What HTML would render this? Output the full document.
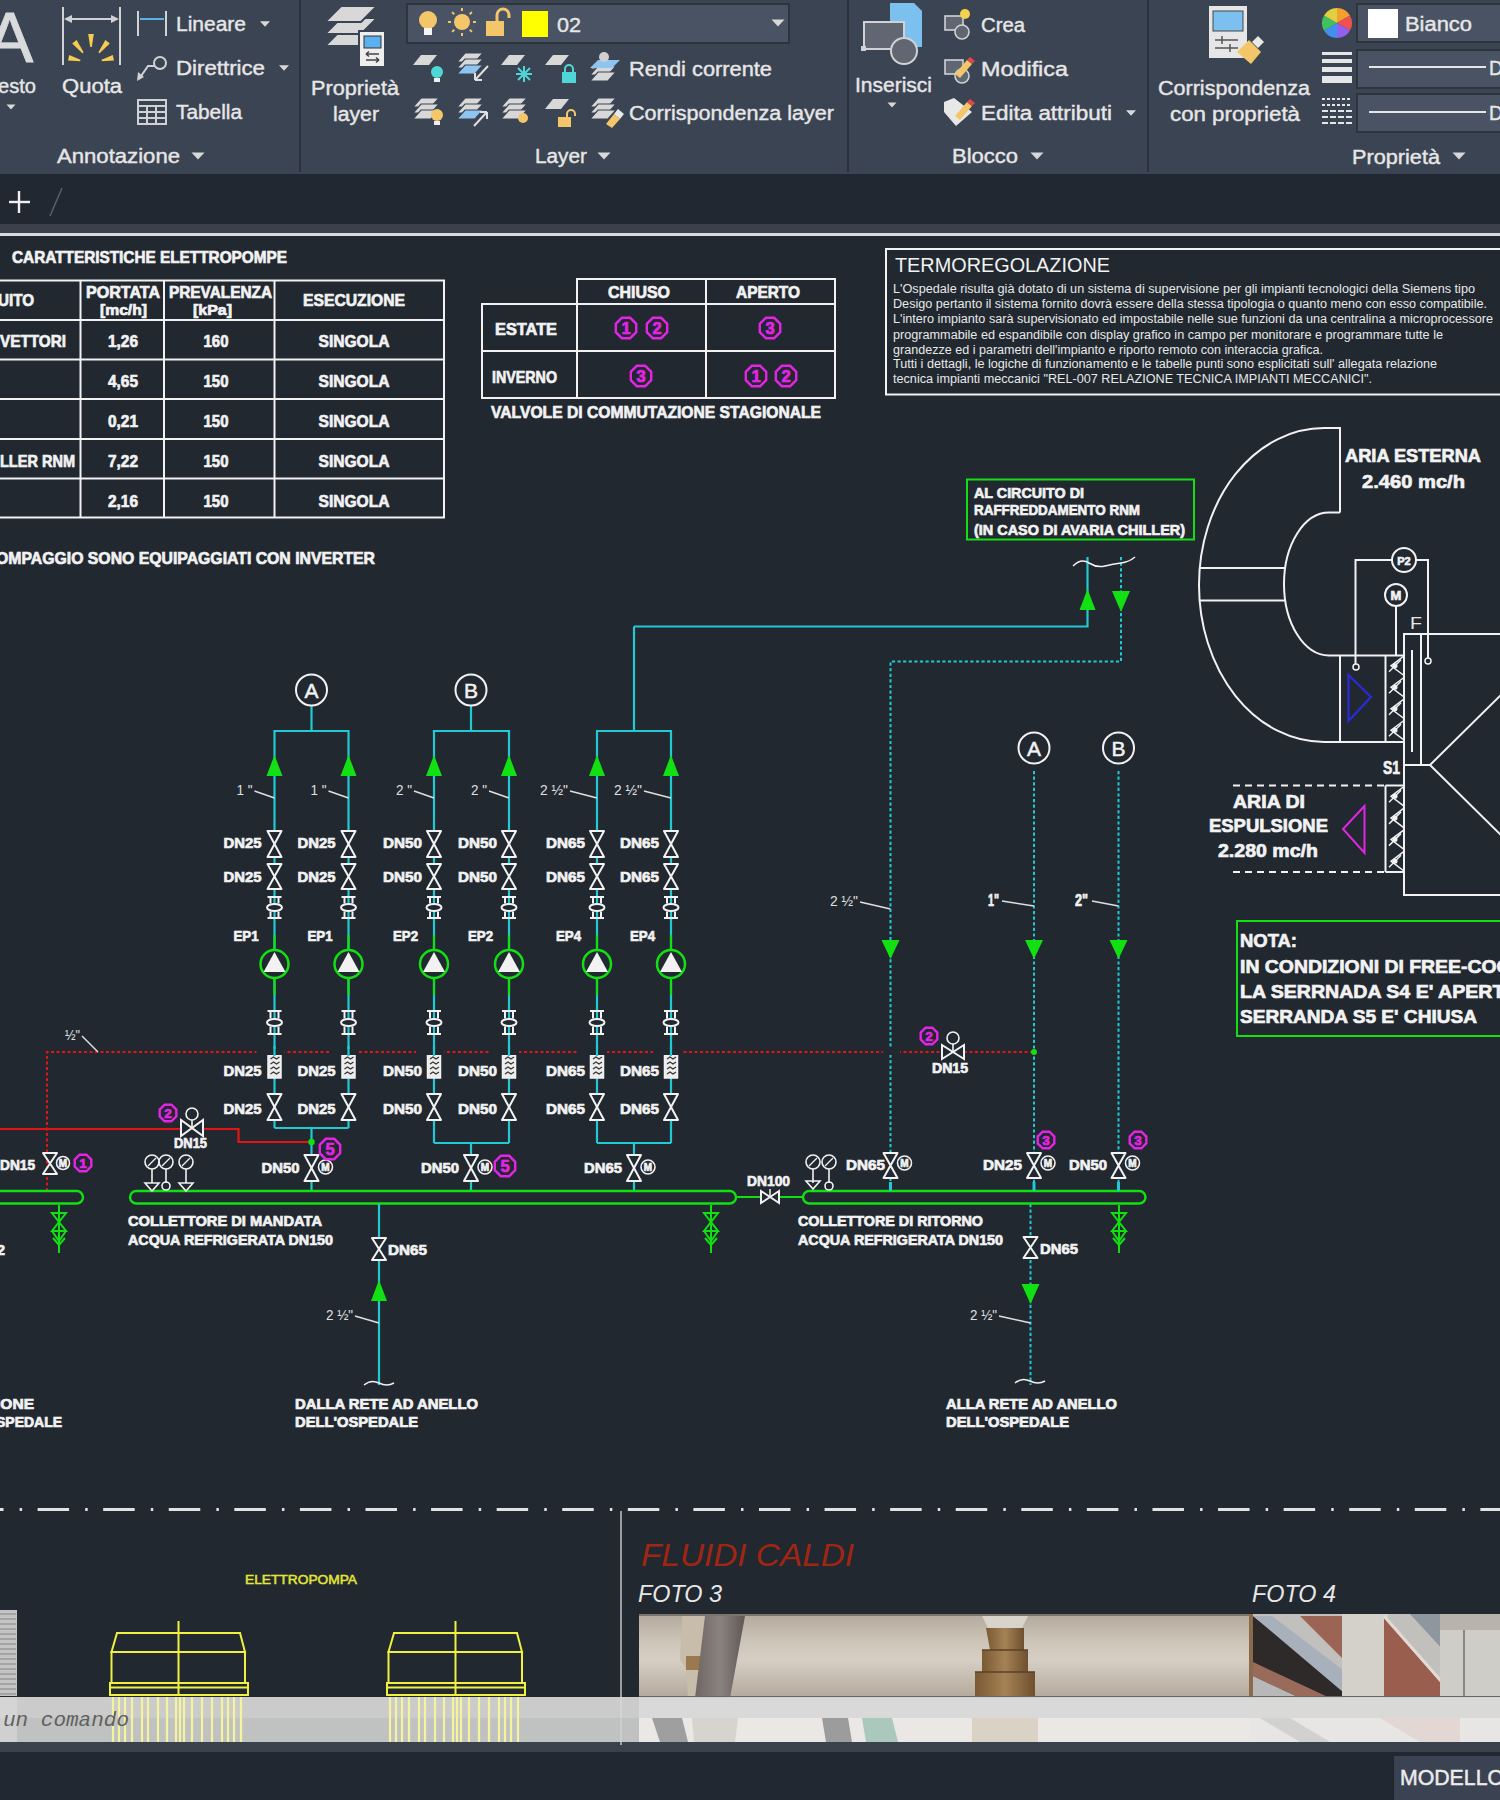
<!DOCTYPE html>
<html><head><meta charset="utf-8">
<style>
html,body{margin:0;padding:0;width:1500px;height:1800px;overflow:hidden;background:#212830;}
svg{position:absolute;left:0;top:0;display:block;}
text{font-family:"Liberation Sans", sans-serif;}
</style></head><body>
<svg width="1500" height="1800" viewBox="0 0 1500 1800">
<rect x="0" y="0" width="1500" height="174" fill="#3b4453"/>
<rect x="299" y="0" width="2" height="172" fill="#2b313b"/>
<rect x="847" y="0" width="2" height="172" fill="#2b313b"/>
<rect x="1147" y="0" width="2" height="172" fill="#2b313b"/>
<rect x="0" y="174" width="1500" height="50" fill="#222831"/>
<rect x="0" y="224" width="1500" height="9" fill="#3a414d"/>
<rect x="0" y="233" width="1500" height="3" fill="#d8dadc"/>
<rect x="0" y="1742" width="1500" height="10" fill="#3a424e"/>
<rect x="0" y="1752" width="1500" height="48" fill="#222831"/>
<rect x="1394" y="1756" width="106" height="44" fill="#3b4352"/>
<text x="1400" y="1785" font-size="22.5" fill="#ececec" font-weight="normal" font-style="normal" text-anchor="start" textLength="104" lengthAdjust="spacingAndGlyphs" stroke="#ececec" stroke-width="0.5">MODELLO</text>
<text x="-14" y="62" font-size="71" fill="#d8dadc" font-weight="normal" font-style="normal" text-anchor="start" stroke="#d8dadc" stroke-width="0.8">A</text>
<text x="-2" y="93" font-size="20" fill="#e6e6e6" font-weight="normal" font-style="normal" text-anchor="start" textLength="38" lengthAdjust="spacingAndGlyphs" stroke="#e6e6e6" stroke-width="0.4">esto</text>
<path d="M6.5,104.525 L15.5,104.525 L11,109.475 Z" fill="#d8d8d8"/>
<g stroke="#d0d2d4" stroke-width="2" fill="none"><line x1="63" y1="7" x2="63" y2="65"/><line x1="120" y1="7" x2="120" y2="65"/><line x1="66" y1="19" x2="117" y2="19"/></g>
<path d="M64,19 l8,-4 v8z M119,19 l-8,-4 v8z" fill="#d0d2d4"/>
<g fill="#f6cc50"><path d="M91.8,47.0 L93.8,34.0 L88.2,34.0 L90.2,47.0Z"/><path d="M83.6,52.3 L76.6,40.0 L72.2,43.4 L82.4,53.2Z"/><path d="M99.6,53.2 L109.8,43.4 L105.4,40.0 L98.4,52.3Z"/><path d="M80.5,59.7 L69.2,55.1 L68.0,60.6 L80.1,61.3Z"/><path d="M101.9,61.3 L114.0,60.6 L112.8,55.1 L101.5,59.7Z"/></g>
<text x="62" y="93" font-size="20" fill="#e6e6e6" font-weight="normal" font-style="normal" text-anchor="start" textLength="60" lengthAdjust="spacingAndGlyphs" stroke="#e6e6e6" stroke-width="0.4">Quota</text>
<g stroke="#d0d2d4" stroke-width="2"><line x1="138" y1="11" x2="138" y2="36"/><line x1="166" y1="11" x2="166" y2="36"/></g>
<line x1="140" y1="19" x2="164" y2="19" stroke="#5ab0ec" stroke-width="2"/>
<text x="176" y="31" font-size="20" fill="#e6e6e6" font-weight="normal" font-style="normal" text-anchor="start" textLength="70" lengthAdjust="spacingAndGlyphs" stroke="#e6e6e6" stroke-width="0.4">Lineare</text>
<path d="M260,21.25 L270,21.25 L265,26.75 Z" fill="#d8d8d8"/>
<g stroke="#d0d2d4" stroke-width="2" fill="none"><circle cx="160" cy="63" r="6"/><path d="M154,66 L148,66 L139,79"/></g>
<path d="M137,81 l1,-9 l6,5z" fill="#d0d2d4"/>
<text x="176" y="75" font-size="20" fill="#e6e6e6" font-weight="normal" font-style="normal" text-anchor="start" textLength="89" lengthAdjust="spacingAndGlyphs" stroke="#e6e6e6" stroke-width="0.4">Direttrice</text>
<path d="M279,65.25 L289,65.25 L284,70.75 Z" fill="#d8d8d8"/>
<g stroke="#d0d2d4" stroke-width="2" fill="none"><rect x="138" y="100" width="28" height="24"/><line x1="138" y1="106" x2="166" y2="106"/><line x1="138" y1="112" x2="166" y2="112"/><line x1="138" y1="118" x2="166" y2="118"/><line x1="147" y1="106" x2="147" y2="124"/><line x1="156" y1="106" x2="156" y2="124"/></g>
<text x="176" y="119" font-size="20" fill="#e6e6e6" font-weight="normal" font-style="normal" text-anchor="start" textLength="66" lengthAdjust="spacingAndGlyphs" stroke="#e6e6e6" stroke-width="0.4">Tabella</text>
<text x="57" y="163" font-size="20" fill="#e6e6e6" font-weight="normal" font-style="normal" text-anchor="start" textLength="123" lengthAdjust="spacingAndGlyphs" stroke="#e6e6e6" stroke-width="0.4">Annotazione</text>
<path d="M191.5,152.425 L204.5,152.425 L198,159.575 Z" fill="#d8d8d8"/>
<path d="M341,30 L377,30 L361,46 L325,46z" fill="#d8d8d8" stroke="#3b4453" stroke-width="2"/>
<path d="M341,18 L377,18 L361,34 L325,34z" fill="#d8d8d8" stroke="#3b4453" stroke-width="2"/>
<path d="M341,6 L377,6 L361,22 L325,22z" fill="#d8d8d8" stroke="#3b4453" stroke-width="2"/>
<rect x="359" y="31" width="26" height="36" fill="#eeeeee" stroke="#3b4453" stroke-width="2"/>
<rect x="364" y="36" width="17" height="12" fill="#5ab0ec" stroke="#333" stroke-width="1"/>
<g stroke="#444" stroke-width="1.5" fill="none"><path d="M366,54 H379 M366,54 l3,-2.5 M366,54 l3,2.5"/><path d="M366,60 H379 M379,60 l-3,-2.5 M379,60 l-3,2.5"/></g>
<text x="311" y="95" font-size="20" fill="#e6e6e6" font-weight="normal" font-style="normal" text-anchor="start" textLength="88" lengthAdjust="spacingAndGlyphs" stroke="#e6e6e6" stroke-width="0.4">Propriet&#224;</text>
<text x="333" y="121" font-size="20" fill="#e6e6e6" font-weight="normal" font-style="normal" text-anchor="start" textLength="46" lengthAdjust="spacingAndGlyphs" stroke="#e6e6e6" stroke-width="0.4">layer</text>
<rect x="407" y="4" width="382" height="39" fill="#4a5363" stroke="#2e343e" stroke-width="2"/>
<g fill="#f4c66a"><circle cx="428" cy="20" r="9"/><rect x="424" y="28" width="8" height="7" fill="#f4f4f4"/></g>
<g fill="#f4c66a"><circle cx="462" cy="22" r="8"/></g>
<g stroke="#f4c66a" stroke-width="2"><line x1="473.0" y1="22.0" x2="476.0" y2="22.0"/><line x1="469.7812709608392" y1="29.775076992159025" x2="471.9034357683408" y2="31.895552535475126"/><line x1="462.00875959381807" y1="32.99999651225018" x2="462.01114857395027" y2="35.99999556104569"/><line x1="454.2311219069799" y1="29.787459995132753" x2="452.1123369725199" y2="31.911312721078048"/><line x1="451.0000139509971" y1="22.017519182081355" x2="448.00001775581444" y2="22.022297140830815"/><line x1="454.206355908885" y1="14.237325732646756" x2="452.0808166113082" y2="12.120232750641327"/><line x1="461.9737212407649" y1="11.000031389735103" x2="461.96655430642807" y2="8.00003995057195"/><line x1="469.75646551909267" y1="14.200176755135615" x2="471.87186520611795" y2="12.072952233808964"/></g>
<rect x="486" y="21" width="18" height="15" fill="#f4c66a"/><path d="M497,21 v-6 a6,6 0 0 1 12,0 v3" stroke="#f4c66a" stroke-width="3" fill="none"/>
<rect x="522" y="11" width="26" height="26" fill="#ffff00"/>
<text x="557" y="32" font-size="21" fill="#e6e6e6" font-weight="normal" font-style="normal" text-anchor="start" textLength="24" lengthAdjust="spacingAndGlyphs" stroke="#e6e6e6" stroke-width="0.4">02</text>
<path d="M771.5,19.425 L784.5,19.425 L778,26.575 Z" fill="#d8d8d8"/>
<path d="M421,55 L437,55 L429,65 L413,65z" fill="#d8d8d8"/>
<circle cx="437" cy="72" r="6" fill="#4fd6d6"/><rect x="434" y="78" width="6" height="4" fill="#eee"/>
<path d="M465,53 L483,53 L475,62 L457,62z" fill="#d8d8d8" stroke="#3b4453" stroke-width="1.2"/>
<path d="M465,59 L483,59 L475,68 L457,68z" fill="#d8d8d8" stroke="#3b4453" stroke-width="1.2"/>
<path d="M465,65 L483,65 L475,74 L457,74z" fill="#8ec4f0" stroke="#3b4453" stroke-width="1.2"/>
<path d="M488,66 L475,80 M475,80 h7 M475,80 v-7" stroke="#e0e0e0" stroke-width="2" fill="none"/>
<path d="M509,55 L525,55 L517,65 L501,65z" fill="#d8d8d8"/>
<g stroke="#4fd6d6" stroke-width="2"><line x1="524" y1="66" x2="524" y2="82"/><line x1="516" y1="74" x2="532" y2="74"/><line x1="518" y1="68" x2="530" y2="80"/><line x1="530" y1="68" x2="518" y2="80"/></g>
<path d="M553,55 L569,55 L561,65 L545,65z" fill="#d8d8d8"/>
<rect x="562" y="72" width="14" height="11" fill="#4fd6d6"/><path d="M565,72 v-3 a4,4 0 0 1 8,0 v3" stroke="#4fd6d6" stroke-width="2" fill="none"/>
<path d="M598,60 L616,60 L608,69 L590,69z" fill="#d8d8d8" stroke="#3b4453" stroke-width="1.2"/>
<path d="M598,66 L616,66 L608,75 L590,75z" fill="#d8d8d8" stroke="#3b4453" stroke-width="1.2"/>
<path d="M598,72 L616,72 L608,81 L590,81z" fill="#d8d8d8" stroke="#3b4453" stroke-width="1.2"/>
<path d="M598,60 L620,60 L612,68 L590,68z" fill="#8ec4f0"/><circle cx="604" cy="57" r="5" fill="#d0d0d0"/>
<text x="629" y="76" font-size="20" fill="#e6e6e6" font-weight="normal" font-style="normal" text-anchor="start" textLength="143" lengthAdjust="spacingAndGlyphs" stroke="#e6e6e6" stroke-width="0.4">Rendi corrente</text>
<path d="M421,98 L439,98 L431,107 L413,107z" fill="#d8d8d8" stroke="#3b4453" stroke-width="1.2"/>
<path d="M421,104 L439,104 L431,113 L413,113z" fill="#d8d8d8" stroke="#3b4453" stroke-width="1.2"/>
<path d="M421,110 L439,110 L431,119 L413,119z" fill="#d8d8d8" stroke="#3b4453" stroke-width="1.2"/>
<circle cx="437" cy="115" r="6" fill="#f4c66a"/><rect x="434" y="121" width="6" height="4" fill="#eee"/>
<path d="M465,98 L483,98 L475,107 L457,107z" fill="#d8d8d8" stroke="#3b4453" stroke-width="1.2"/>
<path d="M465,104 L483,104 L475,113 L457,113z" fill="#d8d8d8" stroke="#3b4453" stroke-width="1.2"/>
<path d="M465,110 L483,110 L475,119 L457,119z" fill="#8ec4f0" stroke="#3b4453" stroke-width="1.2"/>
<path d="M474,126 L487,112 M487,112 h-7 M487,112 v7" stroke="#e0e0e0" stroke-width="2" fill="none"/>
<path d="M509,98 L527,98 L519,107 L501,107z" fill="#d8d8d8" stroke="#3b4453" stroke-width="1.2"/>
<path d="M509,104 L527,104 L519,113 L501,113z" fill="#d8d8d8" stroke="#3b4453" stroke-width="1.2"/>
<path d="M509,110 L527,110 L519,119 L501,119z" fill="#d8d8d8" stroke="#3b4453" stroke-width="1.2"/>
<circle cx="523" cy="118" r="5" fill="#f4c66a"/>
<path d="M553,99 L569,99 L561,109 L545,109z" fill="#d8d8d8"/>
<rect x="558" y="117" width="13" height="10" fill="#f4c66a"/><path d="M567,117 v-3 a4,4 0 0 1 8,0 v2" stroke="#f4c66a" stroke-width="2" fill="none"/>
<path d="M598,98 L616,98 L608,107 L590,107z" fill="#d8d8d8" stroke="#3b4453" stroke-width="1.2"/>
<path d="M598,104 L616,104 L608,113 L590,113z" fill="#d8d8d8" stroke="#3b4453" stroke-width="1.2"/>
<path d="M598,110 L616,110 L608,119 L590,119z" fill="#d8d8d8" stroke="#3b4453" stroke-width="1.2"/>
<path d="M606,124 l8,-10 l6,5 l-8,9z" fill="#f4c66a"/><path d="M614,114 l4,-5 l6,5 l-4,5z" fill="#e8e8e8"/>
<text x="629" y="120" font-size="20" fill="#e6e6e6" font-weight="normal" font-style="normal" text-anchor="start" textLength="205" lengthAdjust="spacingAndGlyphs" stroke="#e6e6e6" stroke-width="0.4">Corrispondenza layer</text>
<text x="535" y="163" font-size="20" fill="#e6e6e6" font-weight="normal" font-style="normal" text-anchor="start" textLength="52" lengthAdjust="spacingAndGlyphs" stroke="#e6e6e6" stroke-width="0.4">Layer</text>
<path d="M597.5,152.425 L610.5,152.425 L604,159.575 Z" fill="#d8d8d8"/>
<path d="M890,3 L914,3 L922,11 L922,47 L890,47z" fill="#7cc0f0"/>
<rect x="864" y="22" width="40" height="27" fill="#606672" stroke="#d0d2d4" stroke-width="2"/>
<circle cx="904" cy="51" r="13" fill="#606672" stroke="#d0d2d4" stroke-width="2"/>
<rect x="861" y="46" width="5" height="5" fill="#d0d2d4"/>
<text x="855" y="92" font-size="20" fill="#e6e6e6" font-weight="normal" font-style="normal" text-anchor="start" textLength="77" lengthAdjust="spacingAndGlyphs" stroke="#e6e6e6" stroke-width="0.4">Inserisci</text>
<path d="M887.5,102.525 L896.5,102.525 L892,107.475 Z" fill="#d8d8d8"/>
<rect x="945" y="16" width="18" height="14" fill="#606672" stroke="#d0d2d4" stroke-width="1.6"/><circle cx="962" cy="32" r="7" fill="#606672" stroke="#d0d2d4" stroke-width="1.6"/>
<circle cx="965" cy="14" r="5" fill="#f4d24a"/>
<text x="981" y="32" font-size="20" fill="#e6e6e6" font-weight="normal" font-style="normal" text-anchor="start" textLength="44" lengthAdjust="spacingAndGlyphs" stroke="#e6e6e6" stroke-width="0.4">Crea</text>
<rect x="945" y="60" width="18" height="14" fill="#606672" stroke="#d0d2d4" stroke-width="1.6"/><circle cx="962" cy="76" r="7" fill="#606672" stroke="#d0d2d4" stroke-width="1.6"/>
<path d="M955,74 l12,-14 l5,4 l-12,14z" fill="#f4c66a"/><path d="M967,60 l3,-3 l5,4 l-3,3z" fill="#e04848"/>
<text x="981" y="76" font-size="20" fill="#e6e6e6" font-weight="normal" font-style="normal" text-anchor="start" textLength="87" lengthAdjust="spacingAndGlyphs" stroke="#e6e6e6" stroke-width="0.4">Modifica</text>
<path d="M944,102 L954,98 L972,112 L956,126 L944,112z" fill="#e8e8e8"/><path d="M955,116 l12,-14 l5,4 l-12,14z" fill="#f4c66a"/><path d="M967,102 l3,-3 l5,4 l-3,3z" fill="#e04848"/>
<text x="981" y="120" font-size="20" fill="#e6e6e6" font-weight="normal" font-style="normal" text-anchor="start" textLength="131" lengthAdjust="spacingAndGlyphs" stroke="#e6e6e6" stroke-width="0.4">Edita attributi</text>
<path d="M1126,110.25 L1136,110.25 L1131,115.75 Z" fill="#d8d8d8"/>
<text x="952" y="163" font-size="20" fill="#e6e6e6" font-weight="normal" font-style="normal" text-anchor="start" textLength="66" lengthAdjust="spacingAndGlyphs" stroke="#e6e6e6" stroke-width="0.4">Blocco</text>
<path d="M1030.5,152.425 L1043.5,152.425 L1037,159.575 Z" fill="#d8d8d8"/>
<rect x="1209" y="6" width="38" height="52" fill="#e6e6e6"/><rect x="1213" y="11" width="30" height="20" fill="#7cc0f0" stroke="#444" stroke-width="1"/>
<g stroke="#555" stroke-width="1.5"><line x1="1215" y1="40" x2="1238" y2="40"/><line x1="1215" y1="48" x2="1238" y2="48"/><line x1="1222" y1="36" x2="1222" y2="44"/><line x1="1230" y1="44" x2="1230" y2="52"/></g>
<path d="M1237,52 l12,-12 l12,12 l-10,12z" fill="#f4c66a"/><path d="M1252,42 l6,-6 l6,6 l-6,6z" fill="#e8e8e8"/>
<text x="1158" y="95" font-size="20" fill="#e6e6e6" font-weight="normal" font-style="normal" text-anchor="start" textLength="152" lengthAdjust="spacingAndGlyphs" stroke="#e6e6e6" stroke-width="0.4">Corrispondenza</text>
<text x="1170" y="121" font-size="20" fill="#e6e6e6" font-weight="normal" font-style="normal" text-anchor="start" textLength="130" lengthAdjust="spacingAndGlyphs" stroke="#e6e6e6" stroke-width="0.4">con propriet&#224;</text>
<path d="M1337,23 L1337.0,8.0 A15,15 0 0 1 1350.0,15.5z" fill="#f4a030"/>
<path d="M1337,23 L1350.0,15.5 A15,15 0 0 1 1350.0,30.5z" fill="#f05050"/>
<path d="M1337,23 L1350.0,30.5 A15,15 0 0 1 1337.0,38.0z" fill="#9060f0"/>
<path d="M1337,23 L1337.0,38.0 A15,15 0 0 1 1324.0,30.5z" fill="#4090f0"/>
<path d="M1337,23 L1324.0,30.5 A15,15 0 0 1 1324.0,15.5z" fill="#40c060"/>
<path d="M1337,23 L1324.0,15.5 A15,15 0 0 1 1337.0,8.0z" fill="#e0d040"/>
<g fill="#e6e6e6"><rect x="1322" y="52" width="30" height="3"/><rect x="1322" y="59" width="30" height="4"/><rect x="1322" y="67" width="30" height="5"/><rect x="1322" y="76" width="30" height="7"/></g>
<g stroke="#e6e6e6" stroke-width="2" stroke-dasharray="3,2"><line x1="1322" y1="99" x2="1352" y2="99"/><line x1="1322" y1="105" x2="1352" y2="105"/></g>
<g stroke="#e6e6e6" stroke-width="2" stroke-dasharray="6,2"><line x1="1322" y1="111" x2="1352" y2="111"/><line x1="1322" y1="117" x2="1352" y2="117"/><line x1="1322" y1="123" x2="1352" y2="123"/></g>
<rect x="1357" y="4" width="150" height="38" fill="#4a5363" stroke="#2e343e" stroke-width="2"/>
<rect x="1357" y="50" width="150" height="38" fill="#4a5363" stroke="#2e343e" stroke-width="2"/>
<rect x="1357" y="94" width="150" height="38" fill="#4a5363" stroke="#2e343e" stroke-width="2"/>
<rect x="1368" y="9" width="30" height="29" fill="#ffffff"/>
<text x="1405" y="31" font-size="20" fill="#e6e6e6" font-weight="normal" font-style="normal" text-anchor="start" textLength="67" lengthAdjust="spacingAndGlyphs" stroke="#e6e6e6" stroke-width="0.4">Bianco</text>
<line x1="1369" y1="67" x2="1486" y2="67" stroke="#e6e6e6" stroke-width="2"/><line x1="1369" y1="112" x2="1486" y2="112" stroke="#e6e6e6" stroke-width="2"/>
<text x="1489" y="75" font-size="20" fill="#e6e6e6" font-weight="normal" font-style="normal" text-anchor="start" textLength="14" lengthAdjust="spacingAndGlyphs" stroke="#e6e6e6" stroke-width="0.4">D</text>
<text x="1489" y="120" font-size="20" fill="#e6e6e6" font-weight="normal" font-style="normal" text-anchor="start" textLength="14" lengthAdjust="spacingAndGlyphs" stroke="#e6e6e6" stroke-width="0.4">D</text>
<text x="1352" y="164" font-size="20" fill="#e6e6e6" font-weight="normal" font-style="normal" text-anchor="start" textLength="88" lengthAdjust="spacingAndGlyphs" stroke="#e6e6e6" stroke-width="0.4">Propriet&#224;</text>
<path d="M1452.5,152.425 L1465.5,152.425 L1459,159.575 Z" fill="#d8d8d8"/>
<g stroke="#f0f0f0" stroke-width="2.4"><line x1="9" y1="202" x2="30" y2="202"/><line x1="19" y1="191" x2="19" y2="213"/></g>
<line x1="62" y1="188" x2="50" y2="216" stroke="#5a606a" stroke-width="1.5"/>
<text x="12" y="263" font-size="17" fill="#f2f2f2" font-weight="bold" font-style="normal" text-anchor="start" textLength="275" lengthAdjust="spacingAndGlyphs" stroke="#f2f2f2" stroke-width="0.7" >CARATTERISTICHE ELETTROPOMPE</text>
<g stroke="#f2f2f2" stroke-width="2" fill="none">
<path d="M-5,280.5 H444 V517.5 H-5"/>
<line x1="-5" y1="320" x2="444" y2="320"/>
<line x1="-5" y1="359.5" x2="444" y2="359.5"/>
<line x1="-5" y1="399" x2="444" y2="399"/>
<line x1="-5" y1="439" x2="444" y2="439"/>
<line x1="-5" y1="478.5" x2="444" y2="478.5"/>
<line x1="80.5" y1="280.5" x2="80.5" y2="517.5"/>
<line x1="164" y1="280.5" x2="164" y2="517.5"/>
<line x1="274.5" y1="280.5" x2="274.5" y2="517.5"/>
</g>
<text x="-2" y="306" font-size="17" fill="#f2f2f2" font-weight="bold" font-style="normal" text-anchor="start" textLength="36" lengthAdjust="spacingAndGlyphs" stroke="#f2f2f2" stroke-width="0.7" >UITO</text>
<text x="86" y="298" font-size="16" fill="#f2f2f2" font-weight="bold" font-style="normal" text-anchor="start" textLength="74" lengthAdjust="spacingAndGlyphs" stroke="#f2f2f2" stroke-width="0.7" >PORTATA</text>
<text x="100" y="315" font-size="15" fill="#f2f2f2" font-weight="bold" font-style="normal" text-anchor="start" textLength="47" lengthAdjust="spacingAndGlyphs" stroke="#f2f2f2" stroke-width="0.7" >[mc/h]</text>
<text x="169" y="298" font-size="16" fill="#f2f2f2" font-weight="bold" font-style="normal" text-anchor="start" textLength="103" lengthAdjust="spacingAndGlyphs" stroke="#f2f2f2" stroke-width="0.7" >PREVALENZA</text>
<text x="193" y="315" font-size="15" fill="#f2f2f2" font-weight="bold" font-style="normal" text-anchor="start" textLength="39" lengthAdjust="spacingAndGlyphs" stroke="#f2f2f2" stroke-width="0.7" >[kPa]</text>
<text x="303" y="306" font-size="17" fill="#f2f2f2" font-weight="bold" font-style="normal" text-anchor="start" textLength="102" lengthAdjust="spacingAndGlyphs" stroke="#f2f2f2" stroke-width="0.7" >ESECUZIONE</text>
<text x="0" y="347" font-size="17" fill="#f2f2f2" font-weight="bold" font-style="normal" text-anchor="start" textLength="66" lengthAdjust="spacingAndGlyphs" stroke="#f2f2f2" stroke-width="0.7" >VETTORI</text>
<text x="123" y="347" font-size="17" fill="#f2f2f2" font-weight="bold" font-style="normal" text-anchor="middle" textLength="30" lengthAdjust="spacingAndGlyphs" stroke="#f2f2f2" stroke-width="0.7" >1,26</text>
<text x="216" y="347" font-size="17" fill="#f2f2f2" font-weight="bold" font-style="normal" text-anchor="middle" textLength="25" lengthAdjust="spacingAndGlyphs" stroke="#f2f2f2" stroke-width="0.7" >160</text>
<text x="354" y="347" font-size="17" fill="#f2f2f2" font-weight="bold" font-style="normal" text-anchor="middle" textLength="71" lengthAdjust="spacingAndGlyphs" stroke="#f2f2f2" stroke-width="0.7" >SINGOLA</text>
<text x="123" y="387" font-size="17" fill="#f2f2f2" font-weight="bold" font-style="normal" text-anchor="middle" textLength="30" lengthAdjust="spacingAndGlyphs" stroke="#f2f2f2" stroke-width="0.7" >4,65</text>
<text x="216" y="387" font-size="17" fill="#f2f2f2" font-weight="bold" font-style="normal" text-anchor="middle" textLength="25" lengthAdjust="spacingAndGlyphs" stroke="#f2f2f2" stroke-width="0.7" >150</text>
<text x="354" y="387" font-size="17" fill="#f2f2f2" font-weight="bold" font-style="normal" text-anchor="middle" textLength="71" lengthAdjust="spacingAndGlyphs" stroke="#f2f2f2" stroke-width="0.7" >SINGOLA</text>
<text x="123" y="427" font-size="17" fill="#f2f2f2" font-weight="bold" font-style="normal" text-anchor="middle" textLength="30" lengthAdjust="spacingAndGlyphs" stroke="#f2f2f2" stroke-width="0.7" >0,21</text>
<text x="216" y="427" font-size="17" fill="#f2f2f2" font-weight="bold" font-style="normal" text-anchor="middle" textLength="25" lengthAdjust="spacingAndGlyphs" stroke="#f2f2f2" stroke-width="0.7" >150</text>
<text x="354" y="427" font-size="17" fill="#f2f2f2" font-weight="bold" font-style="normal" text-anchor="middle" textLength="71" lengthAdjust="spacingAndGlyphs" stroke="#f2f2f2" stroke-width="0.7" >SINGOLA</text>
<text x="0" y="467" font-size="17" fill="#f2f2f2" font-weight="bold" font-style="normal" text-anchor="start" textLength="75" lengthAdjust="spacingAndGlyphs" stroke="#f2f2f2" stroke-width="0.7" >LLER RNM</text>
<text x="123" y="467" font-size="17" fill="#f2f2f2" font-weight="bold" font-style="normal" text-anchor="middle" textLength="30" lengthAdjust="spacingAndGlyphs" stroke="#f2f2f2" stroke-width="0.7" >7,22</text>
<text x="216" y="467" font-size="17" fill="#f2f2f2" font-weight="bold" font-style="normal" text-anchor="middle" textLength="25" lengthAdjust="spacingAndGlyphs" stroke="#f2f2f2" stroke-width="0.7" >150</text>
<text x="354" y="467" font-size="17" fill="#f2f2f2" font-weight="bold" font-style="normal" text-anchor="middle" textLength="71" lengthAdjust="spacingAndGlyphs" stroke="#f2f2f2" stroke-width="0.7" >SINGOLA</text>
<text x="123" y="507" font-size="17" fill="#f2f2f2" font-weight="bold" font-style="normal" text-anchor="middle" textLength="30" lengthAdjust="spacingAndGlyphs" stroke="#f2f2f2" stroke-width="0.7" >2,16</text>
<text x="216" y="507" font-size="17" fill="#f2f2f2" font-weight="bold" font-style="normal" text-anchor="middle" textLength="25" lengthAdjust="spacingAndGlyphs" stroke="#f2f2f2" stroke-width="0.7" >150</text>
<text x="354" y="507" font-size="17" fill="#f2f2f2" font-weight="bold" font-style="normal" text-anchor="middle" textLength="71" lengthAdjust="spacingAndGlyphs" stroke="#f2f2f2" stroke-width="0.7" >SINGOLA</text>
<text x="-4" y="564" font-size="17" fill="#f2f2f2" font-weight="bold" font-style="normal" text-anchor="start" textLength="379" lengthAdjust="spacingAndGlyphs" stroke="#f2f2f2" stroke-width="0.7" >OMPAGGIO SONO  EQUIPAGGIATI CON INVERTER</text>
<g stroke="#f2f2f2" stroke-width="2" fill="none">
<path d="M577,398 V279 H835 V398 H482 V304 H835"/>
<line x1="706" y1="279" x2="706" y2="398"/><line x1="482" y1="351" x2="835" y2="351"/>
</g>
<text x="608" y="298" font-size="17" fill="#f2f2f2" font-weight="bold" font-style="normal" text-anchor="start" textLength="62" lengthAdjust="spacingAndGlyphs" stroke="#f2f2f2" stroke-width="0.7" >CHIUSO</text>
<text x="736" y="298" font-size="17" fill="#f2f2f2" font-weight="bold" font-style="normal" text-anchor="start" textLength="64" lengthAdjust="spacingAndGlyphs" stroke="#f2f2f2" stroke-width="0.7" >APERTO</text>
<text x="495" y="335" font-size="17" fill="#f2f2f2" font-weight="bold" font-style="normal" text-anchor="start" textLength="62" lengthAdjust="spacingAndGlyphs" stroke="#f2f2f2" stroke-width="0.7" >ESTATE</text>
<text x="492" y="383" font-size="17" fill="#f2f2f2" font-weight="bold" font-style="normal" text-anchor="start" textLength="65" lengthAdjust="spacingAndGlyphs" stroke="#f2f2f2" stroke-width="0.7" >INVERNO</text>
<polygon points="636.2,332.2 630.2,338.2 621.8,338.2 615.8,332.2 615.8,323.8 621.8,317.8 630.2,317.8 636.2,323.8" fill="none" stroke="#e424e4" stroke-width="2.4"/>
<text x="626" y="334.05" font-size="16.5" fill="#e424e4" font-weight="bold" font-style="normal" text-anchor="middle" stroke="#e424e4" stroke-width="0.7" >1</text>
<polygon points="667.2,332.2 661.2,338.2 652.8,338.2 646.8,332.2 646.8,323.8 652.8,317.8 661.2,317.8 667.2,323.8" fill="none" stroke="#e424e4" stroke-width="2.4"/>
<text x="657" y="334.05" font-size="16.5" fill="#e424e4" font-weight="bold" font-style="normal" text-anchor="middle" stroke="#e424e4" stroke-width="0.7" >2</text>
<polygon points="780.2,332.2 774.2,338.2 765.8,338.2 759.8,332.2 759.8,323.8 765.8,317.8 774.2,317.8 780.2,323.8" fill="none" stroke="#e424e4" stroke-width="2.4"/>
<text x="770" y="334.05" font-size="16.5" fill="#e424e4" font-weight="bold" font-style="normal" text-anchor="middle" stroke="#e424e4" stroke-width="0.7" >3</text>
<polygon points="651.2,380.2 645.2,386.2 636.8,386.2 630.8,380.2 630.8,371.8 636.8,365.8 645.2,365.8 651.2,371.8" fill="none" stroke="#e424e4" stroke-width="2.4"/>
<text x="641" y="382.05" font-size="16.5" fill="#e424e4" font-weight="bold" font-style="normal" text-anchor="middle" stroke="#e424e4" stroke-width="0.7" >3</text>
<polygon points="766.2,380.2 760.2,386.2 751.8,386.2 745.8,380.2 745.8,371.8 751.8,365.8 760.2,365.8 766.2,371.8" fill="none" stroke="#e424e4" stroke-width="2.4"/>
<text x="756" y="382.05" font-size="16.5" fill="#e424e4" font-weight="bold" font-style="normal" text-anchor="middle" stroke="#e424e4" stroke-width="0.7" >1</text>
<polygon points="796.2,380.2 790.2,386.2 781.8,386.2 775.8,380.2 775.8,371.8 781.8,365.8 790.2,365.8 796.2,371.8" fill="none" stroke="#e424e4" stroke-width="2.4"/>
<text x="786" y="382.05" font-size="16.5" fill="#e424e4" font-weight="bold" font-style="normal" text-anchor="middle" stroke="#e424e4" stroke-width="0.7" >2</text>
<text x="491" y="418" font-size="17" fill="#f2f2f2" font-weight="bold" font-style="normal" text-anchor="start" textLength="330" lengthAdjust="spacingAndGlyphs" stroke="#f2f2f2" stroke-width="0.7" >VALVOLE DI COMMUTAZIONE STAGIONALE</text>
<path d="M1505,249 H886 V394.5 H1505" stroke="#f2f2f2" stroke-width="2" fill="none"/>
<text x="895" y="272" font-size="20" fill="#f2f2f2" font-weight="normal" font-style="normal" text-anchor="start" textLength="215" lengthAdjust="spacingAndGlyphs" >TERMOREGOLAZIONE</text>
<text x="893" y="293" font-size="12" fill="#e8e8e8" font-weight="normal" font-style="normal" text-anchor="start" textLength="582" lengthAdjust="spacingAndGlyphs" >L'Ospedale risulta gi&#224; dotato di un sistema di supervisione per gli impianti tecnologici della Siemens tipo</text>
<text x="893" y="308" font-size="12" fill="#e8e8e8" font-weight="normal" font-style="normal" text-anchor="start" textLength="594" lengthAdjust="spacingAndGlyphs" >Desigo pertanto il sistema fornito dovr&#224; essere della stessa tipologia o quanto meno con esso compatibile.</text>
<text x="893" y="323" font-size="12" fill="#e8e8e8" font-weight="normal" font-style="normal" text-anchor="start" textLength="600" lengthAdjust="spacingAndGlyphs" >L'intero impianto sar&#224; supervisionato ed impostabile nelle sue funzioni da una centralina a microprocessore</text>
<text x="893" y="339" font-size="12" fill="#e8e8e8" font-weight="normal" font-style="normal" text-anchor="start" textLength="550" lengthAdjust="spacingAndGlyphs" >programmabile ed espandibile con display grafico in campo per monitorare e programmare tutte le</text>
<text x="893" y="354" font-size="12" fill="#e8e8e8" font-weight="normal" font-style="normal" text-anchor="start" textLength="430" lengthAdjust="spacingAndGlyphs" >grandezze ed i parametri dell'impianto e riporto remoto con interaccia grafica.</text>
<text x="893" y="368" font-size="12" fill="#e8e8e8" font-weight="normal" font-style="normal" text-anchor="start" textLength="544" lengthAdjust="spacingAndGlyphs" >Tutti i dettagli, le logiche di funzionamento e le tabelle punti sono esplicitati sull' allegata relazione</text>
<text x="893" y="383" font-size="12" fill="#e8e8e8" font-weight="normal" font-style="normal" text-anchor="start" textLength="479" lengthAdjust="spacingAndGlyphs" >tecnica impianti meccanici "REL-007 RELAZIONE TECNICA IMPIANTI MECCANICI".</text>
<rect x="967" y="479.5" width="227" height="60" fill="none" stroke="#12e012" stroke-width="2"/>
<text x="974" y="498" font-size="15" fill="#f2f2f2" font-weight="bold" font-style="normal" text-anchor="start" textLength="110" lengthAdjust="spacingAndGlyphs" stroke="#f2f2f2" stroke-width="0.7" >AL CIRCUITO DI</text>
<text x="974" y="515" font-size="15" fill="#f2f2f2" font-weight="bold" font-style="normal" text-anchor="start" textLength="166" lengthAdjust="spacingAndGlyphs" stroke="#f2f2f2" stroke-width="0.7" >RAFFREDDAMENTO RNM</text>
<text x="974" y="535" font-size="15" fill="#f2f2f2" font-weight="bold" font-style="normal" text-anchor="start" textLength="211" lengthAdjust="spacingAndGlyphs" stroke="#f2f2f2" stroke-width="0.7" >(IN CASO DI AVARIA CHILLER)</text>
<path d="M1505,921 H1237 V1036 H1505" stroke="#12e012" stroke-width="2" fill="none"/>
<text x="1240" y="947" font-size="19" fill="#f2f2f2" font-weight="bold" font-style="normal" text-anchor="start" textLength="57" lengthAdjust="spacingAndGlyphs" stroke="#f2f2f2" stroke-width="0.7" >NOTA:</text>
<text x="1240" y="973" font-size="19" fill="#f2f2f2" font-weight="bold" font-style="normal" text-anchor="start" textLength="318" lengthAdjust="spacingAndGlyphs" stroke="#f2f2f2" stroke-width="0.7" >IN CONDIZIONI DI FREE-COOLING</text>
<text x="1240" y="998" font-size="19" fill="#f2f2f2" font-weight="bold" font-style="normal" text-anchor="start" textLength="277" lengthAdjust="spacingAndGlyphs" stroke="#f2f2f2" stroke-width="0.7" >LA SERRNADA S4 E' APERTA</text>
<text x="1240" y="1023" font-size="19" fill="#f2f2f2" font-weight="bold" font-style="normal" text-anchor="start" textLength="237" lengthAdjust="spacingAndGlyphs" stroke="#f2f2f2" stroke-width="0.7" >SERRANDA S5 E' CHIUSA</text>
<path d="M274.5,1128 V731 H348.5 V1128" stroke="#22c8d2" stroke-width="2.2" fill="none"/>
<line x1="274.5" y1="1128" x2="348.5" y2="1128" stroke="#22c8d2" stroke-width="2.2" />
<line x1="311.5" y1="1128" x2="311.5" y2="1191" stroke="#22c8d2" stroke-width="2.2" />
<line x1="311.5" y1="706" x2="311.5" y2="731" stroke="#22c8d2" stroke-width="2.2" />
<circle cx="311.5" cy="690" r="15.5" fill="none" stroke="#f2f2f2" stroke-width="2"/>
<text x="311.5" y="697.5" font-size="21" fill="#f2f2f2" font-weight="normal" font-style="normal" text-anchor="middle" stroke="#f2f2f2" stroke-width="0.5">A</text>
<line x1="274.5" y1="935" x2="274.5" y2="995" stroke="#12e012" stroke-width="2.2" />
<path d="M274.5,755 L282.5,776 L266.5,776 Z" fill="#12e012"/>
<text x="236.5" y="795" font-size="15" fill="#e0e0e0" font-weight="normal" font-style="normal" text-anchor="start" textLength="16" lengthAdjust="spacingAndGlyphs" >1 "</text>
<line x1="254.5" y1="791" x2="274.5" y2="798" stroke="#e0e0e0" stroke-width="1.5" />
<path d="M267.5,831 H281.5 L267.5,857 H281.5 Z" fill="#212830" stroke="#f2f2f2" stroke-width="2" stroke-linejoin="round"/>
<path d="M267.5,864 H281.5 L267.5,889 H281.5 Z" fill="#212830" stroke="#f2f2f2" stroke-width="2" stroke-linejoin="round"/>
<g stroke="#f2f2f2" stroke-width="2" fill="#212830"><line x1="267.5" y1="897" x2="281.5" y2="897"/><line x1="270.5" y1="897" x2="270.5" y2="903.5"/><line x1="278.5" y1="897" x2="278.5" y2="903.5"/><ellipse cx="274.5" cy="907.5" rx="7.5" ry="3.5"/><line x1="270.5" y1="911.5" x2="270.5" y2="918"/><line x1="278.5" y1="911.5" x2="278.5" y2="918"/><line x1="267.5" y1="918" x2="281.5" y2="918"/></g>
<circle cx="274.5" cy="964" r="14" fill="#212830" stroke="#12e012" stroke-width="2.5"/>
<path d="M274.5,952 L285.5,972 L263.5,972 Z" fill="#f2f2f2"/>
<g stroke="#f2f2f2" stroke-width="2" fill="#212830"><line x1="267.5" y1="1011" x2="281.5" y2="1011"/><line x1="270.5" y1="1011" x2="270.5" y2="1018.5"/><line x1="278.5" y1="1011" x2="278.5" y2="1018.5"/><ellipse cx="274.5" cy="1022.5" rx="7.5" ry="3.5"/><line x1="270.5" y1="1026.5" x2="270.5" y2="1034"/><line x1="278.5" y1="1026.5" x2="278.5" y2="1034"/><line x1="267.5" y1="1034" x2="281.5" y2="1034"/></g>
<rect x="268.0" y="1055" width="13" height="23" fill="#ececec" stroke="#f2f2f2" stroke-width="1.5"/>
<path d="M270.5,1059 l3,-2 l3,2 l3,-2" stroke="#333" stroke-width="1.2" fill="none"/>
<path d="M270.5,1064 l3,-2 l3,2 l3,-2" stroke="#333" stroke-width="1.2" fill="none"/>
<path d="M270.5,1069 l3,-2 l3,2 l3,-2" stroke="#333" stroke-width="1.2" fill="none"/>
<path d="M270.5,1074 l3,-2 l3,2 l3,-2" stroke="#333" stroke-width="1.2" fill="none"/>
<path d="M267.5,1094 H281.5 L267.5,1120 H281.5 Z" fill="#212830" stroke="#f2f2f2" stroke-width="2" stroke-linejoin="round"/>
<text x="223.5" y="848" font-size="15" fill="#f2f2f2" font-weight="bold" font-style="normal" text-anchor="start" textLength="38" lengthAdjust="spacingAndGlyphs" stroke="#f2f2f2" stroke-width="0.7" >DN25</text>
<text x="223.5" y="881.5" font-size="15" fill="#f2f2f2" font-weight="bold" font-style="normal" text-anchor="start" textLength="38" lengthAdjust="spacingAndGlyphs" stroke="#f2f2f2" stroke-width="0.7" >DN25</text>
<text x="223.5" y="1076" font-size="15" fill="#f2f2f2" font-weight="bold" font-style="normal" text-anchor="start" textLength="38" lengthAdjust="spacingAndGlyphs" stroke="#f2f2f2" stroke-width="0.7" >DN25</text>
<text x="223.5" y="1114" font-size="15" fill="#f2f2f2" font-weight="bold" font-style="normal" text-anchor="start" textLength="38" lengthAdjust="spacingAndGlyphs" stroke="#f2f2f2" stroke-width="0.7" >DN25</text>
<text x="233.5" y="940.5" font-size="15" fill="#f2f2f2" font-weight="bold" font-style="normal" text-anchor="start" textLength="25" lengthAdjust="spacingAndGlyphs" stroke="#f2f2f2" stroke-width="0.7" >EP1</text>
<line x1="348.5" y1="935" x2="348.5" y2="995" stroke="#12e012" stroke-width="2.2" />
<path d="M348.5,755 L356.5,776 L340.5,776 Z" fill="#12e012"/>
<text x="310.5" y="795" font-size="15" fill="#e0e0e0" font-weight="normal" font-style="normal" text-anchor="start" textLength="16" lengthAdjust="spacingAndGlyphs" >1 "</text>
<line x1="328.5" y1="791" x2="348.5" y2="798" stroke="#e0e0e0" stroke-width="1.5" />
<path d="M341.5,831 H355.5 L341.5,857 H355.5 Z" fill="#212830" stroke="#f2f2f2" stroke-width="2" stroke-linejoin="round"/>
<path d="M341.5,864 H355.5 L341.5,889 H355.5 Z" fill="#212830" stroke="#f2f2f2" stroke-width="2" stroke-linejoin="round"/>
<g stroke="#f2f2f2" stroke-width="2" fill="#212830"><line x1="341.5" y1="897" x2="355.5" y2="897"/><line x1="344.5" y1="897" x2="344.5" y2="903.5"/><line x1="352.5" y1="897" x2="352.5" y2="903.5"/><ellipse cx="348.5" cy="907.5" rx="7.5" ry="3.5"/><line x1="344.5" y1="911.5" x2="344.5" y2="918"/><line x1="352.5" y1="911.5" x2="352.5" y2="918"/><line x1="341.5" y1="918" x2="355.5" y2="918"/></g>
<circle cx="348.5" cy="964" r="14" fill="#212830" stroke="#12e012" stroke-width="2.5"/>
<path d="M348.5,952 L359.5,972 L337.5,972 Z" fill="#f2f2f2"/>
<g stroke="#f2f2f2" stroke-width="2" fill="#212830"><line x1="341.5" y1="1011" x2="355.5" y2="1011"/><line x1="344.5" y1="1011" x2="344.5" y2="1018.5"/><line x1="352.5" y1="1011" x2="352.5" y2="1018.5"/><ellipse cx="348.5" cy="1022.5" rx="7.5" ry="3.5"/><line x1="344.5" y1="1026.5" x2="344.5" y2="1034"/><line x1="352.5" y1="1026.5" x2="352.5" y2="1034"/><line x1="341.5" y1="1034" x2="355.5" y2="1034"/></g>
<rect x="342.0" y="1055" width="13" height="23" fill="#ececec" stroke="#f2f2f2" stroke-width="1.5"/>
<path d="M344.5,1059 l3,-2 l3,2 l3,-2" stroke="#333" stroke-width="1.2" fill="none"/>
<path d="M344.5,1064 l3,-2 l3,2 l3,-2" stroke="#333" stroke-width="1.2" fill="none"/>
<path d="M344.5,1069 l3,-2 l3,2 l3,-2" stroke="#333" stroke-width="1.2" fill="none"/>
<path d="M344.5,1074 l3,-2 l3,2 l3,-2" stroke="#333" stroke-width="1.2" fill="none"/>
<path d="M341.5,1094 H355.5 L341.5,1120 H355.5 Z" fill="#212830" stroke="#f2f2f2" stroke-width="2" stroke-linejoin="round"/>
<text x="297.5" y="848" font-size="15" fill="#f2f2f2" font-weight="bold" font-style="normal" text-anchor="start" textLength="38" lengthAdjust="spacingAndGlyphs" stroke="#f2f2f2" stroke-width="0.7" >DN25</text>
<text x="297.5" y="881.5" font-size="15" fill="#f2f2f2" font-weight="bold" font-style="normal" text-anchor="start" textLength="38" lengthAdjust="spacingAndGlyphs" stroke="#f2f2f2" stroke-width="0.7" >DN25</text>
<text x="297.5" y="1076" font-size="15" fill="#f2f2f2" font-weight="bold" font-style="normal" text-anchor="start" textLength="38" lengthAdjust="spacingAndGlyphs" stroke="#f2f2f2" stroke-width="0.7" >DN25</text>
<text x="297.5" y="1114" font-size="15" fill="#f2f2f2" font-weight="bold" font-style="normal" text-anchor="start" textLength="38" lengthAdjust="spacingAndGlyphs" stroke="#f2f2f2" stroke-width="0.7" >DN25</text>
<text x="307.5" y="940.5" font-size="15" fill="#f2f2f2" font-weight="bold" font-style="normal" text-anchor="start" textLength="25" lengthAdjust="spacingAndGlyphs" stroke="#f2f2f2" stroke-width="0.7" >EP1</text>
<path d="M304.5,1155 H318.5 L304.5,1181 H318.5 Z" fill="#212830" stroke="#f2f2f2" stroke-width="2" stroke-linejoin="round"/>
<circle cx="325.5" cy="1167" r="7" fill="none" stroke="#f2f2f2" stroke-width="1.6"/>
<text x="325.5" y="1171" font-size="10" fill="#f2f2f2" font-weight="bold" font-style="normal" text-anchor="middle" stroke="#f2f2f2" stroke-width="0.7" >M</text>
<text x="261.5" y="1173" font-size="15" fill="#f2f2f2" font-weight="bold" font-style="normal" text-anchor="start" textLength="38" lengthAdjust="spacingAndGlyphs" stroke="#f2f2f2" stroke-width="0.7" >DN50</text>
<path d="M434,1143 V731 H509 V1143" stroke="#22c8d2" stroke-width="2.2" fill="none"/>
<line x1="434" y1="1143" x2="509" y2="1143" stroke="#22c8d2" stroke-width="2.2" />
<line x1="471" y1="1143" x2="471" y2="1191" stroke="#22c8d2" stroke-width="2.2" />
<line x1="471" y1="706" x2="471" y2="731" stroke="#22c8d2" stroke-width="2.2" />
<circle cx="471" cy="690" r="15.5" fill="none" stroke="#f2f2f2" stroke-width="2"/>
<text x="471" y="697.5" font-size="21" fill="#f2f2f2" font-weight="normal" font-style="normal" text-anchor="middle" stroke="#f2f2f2" stroke-width="0.5">B</text>
<line x1="434" y1="935" x2="434" y2="995" stroke="#12e012" stroke-width="2.2" />
<path d="M434,755 L442,776 L426,776 Z" fill="#12e012"/>
<text x="396" y="795" font-size="15" fill="#e0e0e0" font-weight="normal" font-style="normal" text-anchor="start" textLength="16" lengthAdjust="spacingAndGlyphs" >2 "</text>
<line x1="414" y1="791" x2="434" y2="798" stroke="#e0e0e0" stroke-width="1.5" />
<path d="M427,831 H441 L427,857 H441 Z" fill="#212830" stroke="#f2f2f2" stroke-width="2" stroke-linejoin="round"/>
<path d="M427,864 H441 L427,889 H441 Z" fill="#212830" stroke="#f2f2f2" stroke-width="2" stroke-linejoin="round"/>
<g stroke="#f2f2f2" stroke-width="2" fill="#212830"><line x1="427" y1="897" x2="441" y2="897"/><line x1="430" y1="897" x2="430" y2="903.5"/><line x1="438" y1="897" x2="438" y2="903.5"/><ellipse cx="434" cy="907.5" rx="7.5" ry="3.5"/><line x1="430" y1="911.5" x2="430" y2="918"/><line x1="438" y1="911.5" x2="438" y2="918"/><line x1="427" y1="918" x2="441" y2="918"/></g>
<circle cx="434" cy="964" r="14" fill="#212830" stroke="#12e012" stroke-width="2.5"/>
<path d="M434,952 L445,972 L423,972 Z" fill="#f2f2f2"/>
<g stroke="#f2f2f2" stroke-width="2" fill="#212830"><line x1="427" y1="1011" x2="441" y2="1011"/><line x1="430" y1="1011" x2="430" y2="1018.5"/><line x1="438" y1="1011" x2="438" y2="1018.5"/><ellipse cx="434" cy="1022.5" rx="7.5" ry="3.5"/><line x1="430" y1="1026.5" x2="430" y2="1034"/><line x1="438" y1="1026.5" x2="438" y2="1034"/><line x1="427" y1="1034" x2="441" y2="1034"/></g>
<rect x="427.5" y="1055" width="13" height="23" fill="#ececec" stroke="#f2f2f2" stroke-width="1.5"/>
<path d="M430,1059 l3,-2 l3,2 l3,-2" stroke="#333" stroke-width="1.2" fill="none"/>
<path d="M430,1064 l3,-2 l3,2 l3,-2" stroke="#333" stroke-width="1.2" fill="none"/>
<path d="M430,1069 l3,-2 l3,2 l3,-2" stroke="#333" stroke-width="1.2" fill="none"/>
<path d="M430,1074 l3,-2 l3,2 l3,-2" stroke="#333" stroke-width="1.2" fill="none"/>
<path d="M427,1094 H441 L427,1120 H441 Z" fill="#212830" stroke="#f2f2f2" stroke-width="2" stroke-linejoin="round"/>
<text x="383" y="848" font-size="15" fill="#f2f2f2" font-weight="bold" font-style="normal" text-anchor="start" textLength="39" lengthAdjust="spacingAndGlyphs" stroke="#f2f2f2" stroke-width="0.7" >DN50</text>
<text x="383" y="881.5" font-size="15" fill="#f2f2f2" font-weight="bold" font-style="normal" text-anchor="start" textLength="39" lengthAdjust="spacingAndGlyphs" stroke="#f2f2f2" stroke-width="0.7" >DN50</text>
<text x="383" y="1076" font-size="15" fill="#f2f2f2" font-weight="bold" font-style="normal" text-anchor="start" textLength="39" lengthAdjust="spacingAndGlyphs" stroke="#f2f2f2" stroke-width="0.7" >DN50</text>
<text x="383" y="1114" font-size="15" fill="#f2f2f2" font-weight="bold" font-style="normal" text-anchor="start" textLength="39" lengthAdjust="spacingAndGlyphs" stroke="#f2f2f2" stroke-width="0.7" >DN50</text>
<text x="393" y="940.5" font-size="15" fill="#f2f2f2" font-weight="bold" font-style="normal" text-anchor="start" textLength="25" lengthAdjust="spacingAndGlyphs" stroke="#f2f2f2" stroke-width="0.7" >EP2</text>
<line x1="509" y1="935" x2="509" y2="995" stroke="#12e012" stroke-width="2.2" />
<path d="M509,755 L517,776 L501,776 Z" fill="#12e012"/>
<text x="471" y="795" font-size="15" fill="#e0e0e0" font-weight="normal" font-style="normal" text-anchor="start" textLength="16" lengthAdjust="spacingAndGlyphs" >2 "</text>
<line x1="489" y1="791" x2="509" y2="798" stroke="#e0e0e0" stroke-width="1.5" />
<path d="M502,831 H516 L502,857 H516 Z" fill="#212830" stroke="#f2f2f2" stroke-width="2" stroke-linejoin="round"/>
<path d="M502,864 H516 L502,889 H516 Z" fill="#212830" stroke="#f2f2f2" stroke-width="2" stroke-linejoin="round"/>
<g stroke="#f2f2f2" stroke-width="2" fill="#212830"><line x1="502" y1="897" x2="516" y2="897"/><line x1="505" y1="897" x2="505" y2="903.5"/><line x1="513" y1="897" x2="513" y2="903.5"/><ellipse cx="509" cy="907.5" rx="7.5" ry="3.5"/><line x1="505" y1="911.5" x2="505" y2="918"/><line x1="513" y1="911.5" x2="513" y2="918"/><line x1="502" y1="918" x2="516" y2="918"/></g>
<circle cx="509" cy="964" r="14" fill="#212830" stroke="#12e012" stroke-width="2.5"/>
<path d="M509,952 L520,972 L498,972 Z" fill="#f2f2f2"/>
<g stroke="#f2f2f2" stroke-width="2" fill="#212830"><line x1="502" y1="1011" x2="516" y2="1011"/><line x1="505" y1="1011" x2="505" y2="1018.5"/><line x1="513" y1="1011" x2="513" y2="1018.5"/><ellipse cx="509" cy="1022.5" rx="7.5" ry="3.5"/><line x1="505" y1="1026.5" x2="505" y2="1034"/><line x1="513" y1="1026.5" x2="513" y2="1034"/><line x1="502" y1="1034" x2="516" y2="1034"/></g>
<rect x="502.5" y="1055" width="13" height="23" fill="#ececec" stroke="#f2f2f2" stroke-width="1.5"/>
<path d="M505,1059 l3,-2 l3,2 l3,-2" stroke="#333" stroke-width="1.2" fill="none"/>
<path d="M505,1064 l3,-2 l3,2 l3,-2" stroke="#333" stroke-width="1.2" fill="none"/>
<path d="M505,1069 l3,-2 l3,2 l3,-2" stroke="#333" stroke-width="1.2" fill="none"/>
<path d="M505,1074 l3,-2 l3,2 l3,-2" stroke="#333" stroke-width="1.2" fill="none"/>
<path d="M502,1094 H516 L502,1120 H516 Z" fill="#212830" stroke="#f2f2f2" stroke-width="2" stroke-linejoin="round"/>
<text x="458" y="848" font-size="15" fill="#f2f2f2" font-weight="bold" font-style="normal" text-anchor="start" textLength="39" lengthAdjust="spacingAndGlyphs" stroke="#f2f2f2" stroke-width="0.7" >DN50</text>
<text x="458" y="881.5" font-size="15" fill="#f2f2f2" font-weight="bold" font-style="normal" text-anchor="start" textLength="39" lengthAdjust="spacingAndGlyphs" stroke="#f2f2f2" stroke-width="0.7" >DN50</text>
<text x="458" y="1076" font-size="15" fill="#f2f2f2" font-weight="bold" font-style="normal" text-anchor="start" textLength="39" lengthAdjust="spacingAndGlyphs" stroke="#f2f2f2" stroke-width="0.7" >DN50</text>
<text x="458" y="1114" font-size="15" fill="#f2f2f2" font-weight="bold" font-style="normal" text-anchor="start" textLength="39" lengthAdjust="spacingAndGlyphs" stroke="#f2f2f2" stroke-width="0.7" >DN50</text>
<text x="468" y="940.5" font-size="15" fill="#f2f2f2" font-weight="bold" font-style="normal" text-anchor="start" textLength="25" lengthAdjust="spacingAndGlyphs" stroke="#f2f2f2" stroke-width="0.7" >EP2</text>
<path d="M464,1155 H478 L464,1181 H478 Z" fill="#212830" stroke="#f2f2f2" stroke-width="2" stroke-linejoin="round"/>
<circle cx="485" cy="1167" r="7" fill="none" stroke="#f2f2f2" stroke-width="1.6"/>
<text x="485" y="1171" font-size="10" fill="#f2f2f2" font-weight="bold" font-style="normal" text-anchor="middle" stroke="#f2f2f2" stroke-width="0.7" >M</text>
<text x="421" y="1173" font-size="15" fill="#f2f2f2" font-weight="bold" font-style="normal" text-anchor="start" textLength="38" lengthAdjust="spacingAndGlyphs" stroke="#f2f2f2" stroke-width="0.7" >DN50</text>
<path d="M597,1143 V731 H671 V1143" stroke="#22c8d2" stroke-width="2.2" fill="none"/>
<line x1="597" y1="1143" x2="671" y2="1143" stroke="#22c8d2" stroke-width="2.2" />
<line x1="634" y1="1143" x2="634" y2="1191" stroke="#22c8d2" stroke-width="2.2" />
<line x1="634" y1="626.5" x2="634" y2="731" stroke="#22c8d2" stroke-width="2.2" />
<line x1="597" y1="935" x2="597" y2="995" stroke="#12e012" stroke-width="2.2" />
<path d="M597,755 L605,776 L589,776 Z" fill="#12e012"/>
<text x="540" y="795" font-size="15" fill="#e0e0e0" font-weight="normal" font-style="normal" text-anchor="start" textLength="28" lengthAdjust="spacingAndGlyphs" >2 &#189;"</text>
<line x1="570" y1="791" x2="597" y2="798" stroke="#e0e0e0" stroke-width="1.5" />
<path d="M590,831 H604 L590,857 H604 Z" fill="#212830" stroke="#f2f2f2" stroke-width="2" stroke-linejoin="round"/>
<path d="M590,864 H604 L590,889 H604 Z" fill="#212830" stroke="#f2f2f2" stroke-width="2" stroke-linejoin="round"/>
<g stroke="#f2f2f2" stroke-width="2" fill="#212830"><line x1="590" y1="897" x2="604" y2="897"/><line x1="593" y1="897" x2="593" y2="903.5"/><line x1="601" y1="897" x2="601" y2="903.5"/><ellipse cx="597" cy="907.5" rx="7.5" ry="3.5"/><line x1="593" y1="911.5" x2="593" y2="918"/><line x1="601" y1="911.5" x2="601" y2="918"/><line x1="590" y1="918" x2="604" y2="918"/></g>
<circle cx="597" cy="964" r="14" fill="#212830" stroke="#12e012" stroke-width="2.5"/>
<path d="M597,952 L608,972 L586,972 Z" fill="#f2f2f2"/>
<g stroke="#f2f2f2" stroke-width="2" fill="#212830"><line x1="590" y1="1011" x2="604" y2="1011"/><line x1="593" y1="1011" x2="593" y2="1018.5"/><line x1="601" y1="1011" x2="601" y2="1018.5"/><ellipse cx="597" cy="1022.5" rx="7.5" ry="3.5"/><line x1="593" y1="1026.5" x2="593" y2="1034"/><line x1="601" y1="1026.5" x2="601" y2="1034"/><line x1="590" y1="1034" x2="604" y2="1034"/></g>
<rect x="590.5" y="1055" width="13" height="23" fill="#ececec" stroke="#f2f2f2" stroke-width="1.5"/>
<path d="M593,1059 l3,-2 l3,2 l3,-2" stroke="#333" stroke-width="1.2" fill="none"/>
<path d="M593,1064 l3,-2 l3,2 l3,-2" stroke="#333" stroke-width="1.2" fill="none"/>
<path d="M593,1069 l3,-2 l3,2 l3,-2" stroke="#333" stroke-width="1.2" fill="none"/>
<path d="M593,1074 l3,-2 l3,2 l3,-2" stroke="#333" stroke-width="1.2" fill="none"/>
<path d="M590,1094 H604 L590,1120 H604 Z" fill="#212830" stroke="#f2f2f2" stroke-width="2" stroke-linejoin="round"/>
<text x="546" y="848" font-size="15" fill="#f2f2f2" font-weight="bold" font-style="normal" text-anchor="start" textLength="39" lengthAdjust="spacingAndGlyphs" stroke="#f2f2f2" stroke-width="0.7" >DN65</text>
<text x="546" y="881.5" font-size="15" fill="#f2f2f2" font-weight="bold" font-style="normal" text-anchor="start" textLength="39" lengthAdjust="spacingAndGlyphs" stroke="#f2f2f2" stroke-width="0.7" >DN65</text>
<text x="546" y="1076" font-size="15" fill="#f2f2f2" font-weight="bold" font-style="normal" text-anchor="start" textLength="39" lengthAdjust="spacingAndGlyphs" stroke="#f2f2f2" stroke-width="0.7" >DN65</text>
<text x="546" y="1114" font-size="15" fill="#f2f2f2" font-weight="bold" font-style="normal" text-anchor="start" textLength="39" lengthAdjust="spacingAndGlyphs" stroke="#f2f2f2" stroke-width="0.7" >DN65</text>
<text x="556" y="940.5" font-size="15" fill="#f2f2f2" font-weight="bold" font-style="normal" text-anchor="start" textLength="25" lengthAdjust="spacingAndGlyphs" stroke="#f2f2f2" stroke-width="0.7" >EP4</text>
<line x1="671" y1="935" x2="671" y2="995" stroke="#12e012" stroke-width="2.2" />
<path d="M671,755 L679,776 L663,776 Z" fill="#12e012"/>
<text x="614" y="795" font-size="15" fill="#e0e0e0" font-weight="normal" font-style="normal" text-anchor="start" textLength="28" lengthAdjust="spacingAndGlyphs" >2 &#189;"</text>
<line x1="644" y1="791" x2="671" y2="798" stroke="#e0e0e0" stroke-width="1.5" />
<path d="M664,831 H678 L664,857 H678 Z" fill="#212830" stroke="#f2f2f2" stroke-width="2" stroke-linejoin="round"/>
<path d="M664,864 H678 L664,889 H678 Z" fill="#212830" stroke="#f2f2f2" stroke-width="2" stroke-linejoin="round"/>
<g stroke="#f2f2f2" stroke-width="2" fill="#212830"><line x1="664" y1="897" x2="678" y2="897"/><line x1="667" y1="897" x2="667" y2="903.5"/><line x1="675" y1="897" x2="675" y2="903.5"/><ellipse cx="671" cy="907.5" rx="7.5" ry="3.5"/><line x1="667" y1="911.5" x2="667" y2="918"/><line x1="675" y1="911.5" x2="675" y2="918"/><line x1="664" y1="918" x2="678" y2="918"/></g>
<circle cx="671" cy="964" r="14" fill="#212830" stroke="#12e012" stroke-width="2.5"/>
<path d="M671,952 L682,972 L660,972 Z" fill="#f2f2f2"/>
<g stroke="#f2f2f2" stroke-width="2" fill="#212830"><line x1="664" y1="1011" x2="678" y2="1011"/><line x1="667" y1="1011" x2="667" y2="1018.5"/><line x1="675" y1="1011" x2="675" y2="1018.5"/><ellipse cx="671" cy="1022.5" rx="7.5" ry="3.5"/><line x1="667" y1="1026.5" x2="667" y2="1034"/><line x1="675" y1="1026.5" x2="675" y2="1034"/><line x1="664" y1="1034" x2="678" y2="1034"/></g>
<rect x="664.5" y="1055" width="13" height="23" fill="#ececec" stroke="#f2f2f2" stroke-width="1.5"/>
<path d="M667,1059 l3,-2 l3,2 l3,-2" stroke="#333" stroke-width="1.2" fill="none"/>
<path d="M667,1064 l3,-2 l3,2 l3,-2" stroke="#333" stroke-width="1.2" fill="none"/>
<path d="M667,1069 l3,-2 l3,2 l3,-2" stroke="#333" stroke-width="1.2" fill="none"/>
<path d="M667,1074 l3,-2 l3,2 l3,-2" stroke="#333" stroke-width="1.2" fill="none"/>
<path d="M664,1094 H678 L664,1120 H678 Z" fill="#212830" stroke="#f2f2f2" stroke-width="2" stroke-linejoin="round"/>
<text x="620" y="848" font-size="15" fill="#f2f2f2" font-weight="bold" font-style="normal" text-anchor="start" textLength="39" lengthAdjust="spacingAndGlyphs" stroke="#f2f2f2" stroke-width="0.7" >DN65</text>
<text x="620" y="881.5" font-size="15" fill="#f2f2f2" font-weight="bold" font-style="normal" text-anchor="start" textLength="39" lengthAdjust="spacingAndGlyphs" stroke="#f2f2f2" stroke-width="0.7" >DN65</text>
<text x="620" y="1076" font-size="15" fill="#f2f2f2" font-weight="bold" font-style="normal" text-anchor="start" textLength="39" lengthAdjust="spacingAndGlyphs" stroke="#f2f2f2" stroke-width="0.7" >DN65</text>
<text x="620" y="1114" font-size="15" fill="#f2f2f2" font-weight="bold" font-style="normal" text-anchor="start" textLength="39" lengthAdjust="spacingAndGlyphs" stroke="#f2f2f2" stroke-width="0.7" >DN65</text>
<text x="630" y="940.5" font-size="15" fill="#f2f2f2" font-weight="bold" font-style="normal" text-anchor="start" textLength="25" lengthAdjust="spacingAndGlyphs" stroke="#f2f2f2" stroke-width="0.7" >EP4</text>
<path d="M627,1155 H641 L627,1181 H641 Z" fill="#212830" stroke="#f2f2f2" stroke-width="2" stroke-linejoin="round"/>
<circle cx="648" cy="1167" r="7" fill="none" stroke="#f2f2f2" stroke-width="1.6"/>
<text x="648" y="1171" font-size="10" fill="#f2f2f2" font-weight="bold" font-style="normal" text-anchor="middle" stroke="#f2f2f2" stroke-width="0.7" >M</text>
<text x="584" y="1173" font-size="15" fill="#f2f2f2" font-weight="bold" font-style="normal" text-anchor="start" textLength="38" lengthAdjust="spacingAndGlyphs" stroke="#f2f2f2" stroke-width="0.7" >DN65</text>
<polygon points="340.2,1153.2 334.2,1159.2 325.8,1159.2 319.8,1153.2 319.8,1144.8 325.8,1138.8 334.2,1138.8 340.2,1144.8" fill="none" stroke="#e424e4" stroke-width="2.4"/>
<text x="330" y="1155.05" font-size="16.5" fill="#e424e4" font-weight="bold" font-style="normal" text-anchor="middle" stroke="#e424e4" stroke-width="0.7" >5</text>
<polygon points="515.2,1170.2 509.2,1176.2 500.8,1176.2 494.8,1170.2 494.8,1161.8 500.8,1155.8 509.2,1155.8 515.2,1161.8" fill="none" stroke="#e424e4" stroke-width="2.4"/>
<text x="505" y="1172.05" font-size="16.5" fill="#e424e4" font-weight="bold" font-style="normal" text-anchor="middle" stroke="#e424e4" stroke-width="0.7" >5</text>
<path d="M634,626.5 H1087.5 V557" stroke="#22c8d2" stroke-width="2.2" fill="none"/>
<path d="M1087.5,589 L1095.5,610 L1079.5,610 Z" fill="#12e012"/>
<path d="M1121,557 V661.5 H890.5 V1191" stroke="#22c8d2" stroke-width="2" fill="none" stroke-dasharray="3.2,2.4"/>
<path d="M1112,591 L1130,591 L1121,612 Z" fill="#12e012"/>
<path d="M1073,566 q8,-8 16,-3 t16,3 t16,-3 t14,-6" stroke="#f2f2f2" stroke-width="1.5" fill="none"/>
<circle cx="1034" cy="748" r="15.5" fill="none" stroke="#f2f2f2" stroke-width="2"/>
<text x="1034" y="755.5" font-size="21" fill="#f2f2f2" font-weight="normal" font-style="normal" text-anchor="middle" stroke="#f2f2f2" stroke-width="0.5">A</text>
<circle cx="1118.5" cy="748" r="15.5" fill="none" stroke="#f2f2f2" stroke-width="2"/>
<text x="1118.5" y="755.5" font-size="21" fill="#f2f2f2" font-weight="normal" font-style="normal" text-anchor="middle" stroke="#f2f2f2" stroke-width="0.5">B</text>
<line x1="1034" y1="771" x2="1034" y2="1191" stroke="#22c8d2" stroke-width="2" stroke-dasharray="3.2,2.4"/>
<line x1="1030.5" y1="1204" x2="1030.5" y2="1385" stroke="#22c8d2" stroke-width="2" stroke-dasharray="3.2,2.4"/>
<line x1="1118.5" y1="771" x2="1118.5" y2="1191" stroke="#22c8d2" stroke-width="2" stroke-dasharray="3.2,2.4"/>
<path d="M881.5,940 L899.5,940 L890.5,959 Z" fill="#12e012"/>
<path d="M1025,940 L1043,940 L1034,959 Z" fill="#12e012"/>
<path d="M1109.5,940 L1127.5,940 L1118.5,959 Z" fill="#12e012"/>
<text x="830" y="906" font-size="15" fill="#e0e0e0" font-weight="normal" font-style="normal" text-anchor="start" textLength="28" lengthAdjust="spacingAndGlyphs" >2 &#189;"</text>
<line x1="860" y1="902" x2="890.5" y2="909" stroke="#e0e0e0" stroke-width="1.5" />
<text x="988" y="906" font-size="16" fill="#f2f2f2" font-weight="bold" font-style="normal" text-anchor="start" textLength="11" lengthAdjust="spacingAndGlyphs" stroke="#f2f2f2" stroke-width="0.7" >1"</text>
<line x1="1002" y1="901" x2="1034" y2="906" stroke="#e0e0e0" stroke-width="1.5" />
<text x="1075" y="906" font-size="16" fill="#f2f2f2" font-weight="bold" font-style="normal" text-anchor="start" textLength="13" lengthAdjust="spacingAndGlyphs" stroke="#f2f2f2" stroke-width="0.7" >2"</text>
<line x1="1092" y1="901" x2="1118.5" y2="906" stroke="#e0e0e0" stroke-width="1.5" />
<path d="M47,1191 V1052 H1034" stroke="#e41414" stroke-width="2" fill="none" stroke-dasharray="3,2.5"/>
<rect x="256.5" y="1049" width="28" height="6" fill="#212830"/>
<line x1="274.5" y1="1046" x2="274.5" y2="1056" stroke="#22c8d2" stroke-width="2.2"/>
<rect x="330.5" y="1049" width="28" height="6" fill="#212830"/>
<line x1="348.5" y1="1046" x2="348.5" y2="1056" stroke="#22c8d2" stroke-width="2.2"/>
<rect x="416" y="1049" width="28" height="6" fill="#212830"/>
<line x1="434" y1="1046" x2="434" y2="1056" stroke="#22c8d2" stroke-width="2.2"/>
<rect x="491" y="1049" width="28" height="6" fill="#212830"/>
<line x1="509" y1="1046" x2="509" y2="1056" stroke="#22c8d2" stroke-width="2.2"/>
<rect x="579" y="1049" width="28" height="6" fill="#212830"/>
<line x1="597" y1="1046" x2="597" y2="1056" stroke="#22c8d2" stroke-width="2.2"/>
<rect x="653" y="1049" width="28" height="6" fill="#212830"/>
<line x1="671" y1="1046" x2="671" y2="1056" stroke="#22c8d2" stroke-width="2.2"/>
<rect x="883" y="1049" width="17" height="6" fill="#212830"/>
<circle cx="1034" cy="1052" r="3" fill="#12e012"/>
<text x="65" y="1040" font-size="15" fill="#e0e0e0" font-weight="normal" font-style="normal" text-anchor="start" textLength="15" lengthAdjust="spacingAndGlyphs" >&#189;"</text>
<line x1="82" y1="1036" x2="98" y2="1052" stroke="#e0e0e0" stroke-width="1.5" />
<path d="M-5,1129 H238.5 V1142 H311.5" stroke="#e41414" stroke-width="2.2" fill="none"/>
<circle cx="311.5" cy="1142" r="3.2" fill="#12e012"/>
<rect x="-20" y="1191" width="103" height="12.5" rx="6.25" ry="6.25" fill="none" stroke="#12e012" stroke-width="2.4"/>
<rect x="130" y="1191" width="606" height="12.5" rx="6.25" ry="6.25" fill="none" stroke="#12e012" stroke-width="2.4"/>
<rect x="803" y="1191" width="342.5" height="12.5" rx="6.25" ry="6.25" fill="none" stroke="#12e012" stroke-width="2.4"/>
<line x1="736" y1="1197" x2="803" y2="1197" stroke="#12e012" stroke-width="2.2" />
<path d="M761,1191 V1203 L779,1191 V1203 Z" fill="#212830" stroke="#f2f2f2" stroke-width="2"/>
<line x1="770" y1="1189" x2="770" y2="1197" stroke="#f2f2f2" stroke-width="1.5" />
<text x="747" y="1186" font-size="15" fill="#f2f2f2" font-weight="bold" font-style="normal" text-anchor="start" textLength="43" lengthAdjust="spacingAndGlyphs" stroke="#f2f2f2" stroke-width="0.7" >DN100</text>
<text x="128" y="1226" font-size="14" fill="#f2f2f2" font-weight="bold" font-style="normal" text-anchor="start" textLength="194" lengthAdjust="spacingAndGlyphs" stroke="#f2f2f2" stroke-width="0.7" >COLLETTORE DI MANDATA</text>
<text x="128" y="1245" font-size="14" fill="#f2f2f2" font-weight="bold" font-style="normal" text-anchor="start" textLength="205" lengthAdjust="spacingAndGlyphs" stroke="#f2f2f2" stroke-width="0.7" >ACQUA REFRIGERATA DN150</text>
<text x="798" y="1226" font-size="14" fill="#f2f2f2" font-weight="bold" font-style="normal" text-anchor="start" textLength="185" lengthAdjust="spacingAndGlyphs" stroke="#f2f2f2" stroke-width="0.7" >COLLETTORE DI RITORNO</text>
<text x="798" y="1245" font-size="14" fill="#f2f2f2" font-weight="bold" font-style="normal" text-anchor="start" textLength="205" lengthAdjust="spacingAndGlyphs" stroke="#f2f2f2" stroke-width="0.7" >ACQUA REFRIGERATA DN150</text>
<g stroke="#12e012" stroke-width="2" fill="none"><line x1="59" y1="1205" x2="59" y2="1253"/><path d="M52,1213 H66 L52,1231 H66 Z"/><path d="M52,1231 L59,1241 L66,1231"/><path d="M53,1238 L59,1245 L65,1238"/></g>
<g stroke="#12e012" stroke-width="2" fill="none"><line x1="711" y1="1205" x2="711" y2="1253"/><path d="M704,1213 H718 L704,1231 H718 Z"/><path d="M704,1231 L711,1241 L718,1231"/><path d="M705,1238 L711,1245 L717,1238"/></g>
<g stroke="#12e012" stroke-width="2" fill="none"><line x1="1119" y1="1205" x2="1119" y2="1253"/><path d="M1112,1213 H1126 L1112,1231 H1126 Z"/><path d="M1112,1231 L1119,1241 L1126,1231"/><path d="M1113,1238 L1119,1245 L1125,1238"/></g>
<path d="M43,1153 H57 L43,1174 H57 Z" fill="#212830" stroke="#f2f2f2" stroke-width="2" stroke-linejoin="round"/>
<circle cx="63" cy="1163" r="6.5" fill="none" stroke="#f2f2f2" stroke-width="1.6"/>
<text x="63" y="1167" font-size="10" fill="#f2f2f2" font-weight="bold" font-style="normal" text-anchor="middle" stroke="#f2f2f2" stroke-width="0.7" >M</text>
<polygon points="91.3,1166.4 86.4,1171.3 79.6,1171.3 74.7,1166.4 74.7,1159.6 79.6,1154.7 86.4,1154.7 91.3,1159.6" fill="none" stroke="#e424e4" stroke-width="2.4"/>
<text x="83" y="1167.95" font-size="13.5" fill="#e424e4" font-weight="bold" font-style="normal" text-anchor="middle" stroke="#e424e4" stroke-width="0.7" >1</text>
<text x="0" y="1170" font-size="15" fill="#f2f2f2" font-weight="bold" font-style="normal" text-anchor="start" textLength="35" lengthAdjust="spacingAndGlyphs" stroke="#f2f2f2" stroke-width="0.7" >DN15</text>
<polygon points="176.3,1116.4 171.4,1121.3 164.6,1121.3 159.7,1116.4 159.7,1109.6 164.6,1104.7 171.4,1104.7 176.3,1109.6" fill="none" stroke="#e424e4" stroke-width="2.4"/>
<text x="168" y="1117.95" font-size="13.5" fill="#e424e4" font-weight="bold" font-style="normal" text-anchor="middle" stroke="#e424e4" stroke-width="0.7" >2</text>
<path d="M181,1120 V1136 L203,1120 V1136 Z" fill="#212830" stroke="#f2f2f2" stroke-width="2"/>
<circle cx="192" cy="1114" r="6" fill="#212830" stroke="#f2f2f2" stroke-width="1.6"/><line x1="192" y1="1120" x2="192" y2="1128" stroke="#f2f2f2" stroke-width="1.6"/>
<text x="174" y="1148" font-size="14" fill="#f2f2f2" font-weight="bold" font-style="normal" text-anchor="start" textLength="33" lengthAdjust="spacingAndGlyphs" stroke="#f2f2f2" stroke-width="0.7" >DN15</text>
<circle cx="152" cy="1162" r="7" fill="none" stroke="#f2f2f2" stroke-width="1.6"/>
<line x1="148" y1="1166" x2="156" y2="1158" stroke="#f2f2f2" stroke-width="1.2" />
<line x1="152" y1="1169" x2="152" y2="1183" stroke="#f2f2f2" stroke-width="1.6" />
<path d="M145,1183 H159 L152,1191 Z" fill="none" stroke="#f2f2f2" stroke-width="1.6"/>
<circle cx="166" cy="1162" r="7" fill="none" stroke="#f2f2f2" stroke-width="1.6"/>
<line x1="162" y1="1166" x2="170" y2="1158" stroke="#f2f2f2" stroke-width="1.2" />
<line x1="166" y1="1169" x2="166" y2="1183" stroke="#f2f2f2" stroke-width="1.6" />
<circle cx="166" cy="1186" r="4" fill="none" stroke="#f2f2f2" stroke-width="1.6"/>
<circle cx="186" cy="1162" r="7" fill="none" stroke="#f2f2f2" stroke-width="1.6"/>
<line x1="182" y1="1166" x2="190" y2="1158" stroke="#f2f2f2" stroke-width="1.2" />
<line x1="186" y1="1169" x2="186" y2="1183" stroke="#f2f2f2" stroke-width="1.6" />
<path d="M179,1183 H193 L186,1191 Z" fill="none" stroke="#f2f2f2" stroke-width="1.6"/>
<circle cx="813" cy="1162" r="7" fill="none" stroke="#f2f2f2" stroke-width="1.6"/>
<line x1="809" y1="1166" x2="817" y2="1158" stroke="#f2f2f2" stroke-width="1.2" />
<line x1="813" y1="1169" x2="813" y2="1183" stroke="#f2f2f2" stroke-width="1.6" />
<path d="M806,1181 H820 L813,1189 Z" fill="none" stroke="#f2f2f2" stroke-width="1.6"/>
<circle cx="829" cy="1162" r="7" fill="none" stroke="#f2f2f2" stroke-width="1.6"/>
<line x1="825" y1="1166" x2="833" y2="1158" stroke="#f2f2f2" stroke-width="1.2" />
<line x1="829" y1="1169" x2="829" y2="1183" stroke="#f2f2f2" stroke-width="1.6" />
<circle cx="829" cy="1186" r="4" fill="none" stroke="#f2f2f2" stroke-width="1.6"/>
<rect x="889.0" y="1182" width="3" height="9" fill="#22c8d2"/>
<path d="M883.5,1153 H897.5 L883.5,1178 H897.5 Z" fill="#212830" stroke="#f2f2f2" stroke-width="2" stroke-linejoin="round"/>
<circle cx="904.5" cy="1163" r="7" fill="none" stroke="#f2f2f2" stroke-width="1.6"/>
<text x="904.5" y="1167" font-size="10" fill="#f2f2f2" font-weight="bold" font-style="normal" text-anchor="middle" stroke="#f2f2f2" stroke-width="0.7" >M</text>
<text x="846" y="1170" font-size="15" fill="#f2f2f2" font-weight="bold" font-style="normal" text-anchor="start" textLength="39" lengthAdjust="spacingAndGlyphs" stroke="#f2f2f2" stroke-width="0.7" >DN65</text>
<rect x="1032.5" y="1182" width="3" height="9" fill="#22c8d2"/>
<path d="M1027,1153 H1041 L1027,1178 H1041 Z" fill="#212830" stroke="#f2f2f2" stroke-width="2" stroke-linejoin="round"/>
<circle cx="1048" cy="1163" r="7" fill="none" stroke="#f2f2f2" stroke-width="1.6"/>
<text x="1048" y="1167" font-size="10" fill="#f2f2f2" font-weight="bold" font-style="normal" text-anchor="middle" stroke="#f2f2f2" stroke-width="0.7" >M</text>
<text x="983" y="1170" font-size="15" fill="#f2f2f2" font-weight="bold" font-style="normal" text-anchor="start" textLength="39" lengthAdjust="spacingAndGlyphs" stroke="#f2f2f2" stroke-width="0.7" >DN25</text>
<rect x="1117.0" y="1182" width="3" height="9" fill="#22c8d2"/>
<path d="M1111.5,1153 H1125.5 L1111.5,1178 H1125.5 Z" fill="#212830" stroke="#f2f2f2" stroke-width="2" stroke-linejoin="round"/>
<circle cx="1132.5" cy="1163" r="7" fill="none" stroke="#f2f2f2" stroke-width="1.6"/>
<text x="1132.5" y="1167" font-size="10" fill="#f2f2f2" font-weight="bold" font-style="normal" text-anchor="middle" stroke="#f2f2f2" stroke-width="0.7" >M</text>
<text x="1069" y="1170" font-size="15" fill="#f2f2f2" font-weight="bold" font-style="normal" text-anchor="start" textLength="38" lengthAdjust="spacingAndGlyphs" stroke="#f2f2f2" stroke-width="0.7" >DN50</text>
<polygon points="1054.3,1143.4 1049.4,1148.3 1042.6,1148.3 1037.7,1143.4 1037.7,1136.6 1042.6,1131.7 1049.4,1131.7 1054.3,1136.6" fill="none" stroke="#e424e4" stroke-width="2.4"/>
<text x="1046" y="1144.95" font-size="13.5" fill="#e424e4" font-weight="bold" font-style="normal" text-anchor="middle" stroke="#e424e4" stroke-width="0.7" >3</text>
<polygon points="1146.3,1143.4 1141.4,1148.3 1134.6,1148.3 1129.7,1143.4 1129.7,1136.6 1134.6,1131.7 1141.4,1131.7 1146.3,1136.6" fill="none" stroke="#e424e4" stroke-width="2.4"/>
<text x="1138" y="1144.95" font-size="13.5" fill="#e424e4" font-weight="bold" font-style="normal" text-anchor="middle" stroke="#e424e4" stroke-width="0.7" >3</text>
<polygon points="937.3,1039.4 932.4,1044.3 925.6,1044.3 920.7,1039.4 920.7,1032.6 925.6,1027.7 932.4,1027.7 937.3,1032.6" fill="none" stroke="#e424e4" stroke-width="2.4"/>
<text x="929" y="1040.95" font-size="13.5" fill="#e424e4" font-weight="bold" font-style="normal" text-anchor="middle" stroke="#e424e4" stroke-width="0.7" >2</text>
<path d="M942,1045 V1059 L964,1045 V1059 Z" fill="#212830" stroke="#f2f2f2" stroke-width="2"/>
<circle cx="953" cy="1038" r="6" fill="#212830" stroke="#f2f2f2" stroke-width="1.6"/><line x1="953" y1="1044" x2="953" y2="1052" stroke="#f2f2f2" stroke-width="1.6"/>
<text x="932" y="1073" font-size="14" fill="#f2f2f2" font-weight="bold" font-style="normal" text-anchor="start" textLength="36" lengthAdjust="spacingAndGlyphs" stroke="#f2f2f2" stroke-width="0.7" >DN15</text>
<line x1="379" y1="1204" x2="379" y2="1385" stroke="#22c8d2" stroke-width="2.2" />
<path d="M372,1238 H386 L372,1260 H386 Z" fill="#212830" stroke="#f2f2f2" stroke-width="2" stroke-linejoin="round"/>
<text x="388" y="1255" font-size="15" fill="#f2f2f2" font-weight="bold" font-style="normal" text-anchor="start" textLength="39" lengthAdjust="spacingAndGlyphs" stroke="#f2f2f2" stroke-width="0.7" >DN65</text>
<path d="M379,1280 L387,1301 L371,1301 Z" fill="#12e012"/>
<text x="326" y="1320" font-size="15" fill="#e0e0e0" font-weight="normal" font-style="normal" text-anchor="start" textLength="27" lengthAdjust="spacingAndGlyphs" >2 &#189;"</text>
<line x1="355" y1="1316" x2="379" y2="1323" stroke="#e0e0e0" stroke-width="1.5" />
<path d="M364,1385 q7,-6 15,-2 t15,0" stroke="#f2f2f2" stroke-width="1.5" fill="none"/>
<text x="295" y="1409" font-size="14" fill="#f2f2f2" font-weight="bold" font-style="normal" text-anchor="start" textLength="183" lengthAdjust="spacingAndGlyphs" stroke="#f2f2f2" stroke-width="0.7" >DALLA RETE AD ANELLO</text>
<text x="295" y="1427" font-size="14" fill="#f2f2f2" font-weight="bold" font-style="normal" text-anchor="start" textLength="123" lengthAdjust="spacingAndGlyphs" stroke="#f2f2f2" stroke-width="0.7" >DELL'OSPEDALE</text>
<path d="M1023.5,1237 H1037.5 L1023.5,1258 H1037.5 Z" fill="#212830" stroke="#f2f2f2" stroke-width="2" stroke-linejoin="round"/>
<text x="1040" y="1254" font-size="15" fill="#f2f2f2" font-weight="bold" font-style="normal" text-anchor="start" textLength="38" lengthAdjust="spacingAndGlyphs" stroke="#f2f2f2" stroke-width="0.7" >DN65</text>
<path d="M1021.5,1284 L1039.5,1284 L1030.5,1304 Z" fill="#12e012"/>
<text x="970" y="1320" font-size="15" fill="#e0e0e0" font-weight="normal" font-style="normal" text-anchor="start" textLength="27" lengthAdjust="spacingAndGlyphs" >2 &#189;"</text>
<line x1="999" y1="1316" x2="1030.5" y2="1323" stroke="#e0e0e0" stroke-width="1.5" />
<path d="M1015,1383 q7,-6 15,-2 t15,0" stroke="#f2f2f2" stroke-width="1.5" fill="none"/>
<text x="946" y="1409" font-size="14" fill="#f2f2f2" font-weight="bold" font-style="normal" text-anchor="start" textLength="171" lengthAdjust="spacingAndGlyphs" stroke="#f2f2f2" stroke-width="0.7" >ALLA RETE AD ANELLO</text>
<text x="946" y="1427" font-size="14" fill="#f2f2f2" font-weight="bold" font-style="normal" text-anchor="start" textLength="123" lengthAdjust="spacingAndGlyphs" stroke="#f2f2f2" stroke-width="0.7" >DELL'OSPEDALE</text>
<text x="-4" y="1409" font-size="14" fill="#f2f2f2" font-weight="bold" font-style="normal" text-anchor="start" textLength="38" lengthAdjust="spacingAndGlyphs" stroke="#f2f2f2" stroke-width="0.7" >IONE</text>
<text x="-4" y="1427" font-size="14" fill="#f2f2f2" font-weight="bold" font-style="normal" text-anchor="start" textLength="66" lengthAdjust="spacingAndGlyphs" stroke="#f2f2f2" stroke-width="0.7" >SPEDALE</text>
<text x="-3" y="1255" font-size="14" fill="#f2f2f2" font-weight="bold" font-style="normal" text-anchor="start" textLength="8" lengthAdjust="spacingAndGlyphs" stroke="#f2f2f2" stroke-width="0.7" >2</text>
<g stroke="#f2f2f2" stroke-width="2" fill="none">
<path d="M1340,512.5 V428 H1324 A125,157 0 0 0 1324,742 H1404"/>
<path d="M1340,512.5 H1329 A45,71.5 0 0 0 1329,655.5 H1404"/>
<line x1="1200" y1="568" x2="1285" y2="568"/><line x1="1200" y1="600.5" x2="1285" y2="600.5"/>
<line x1="1340" y1="655" x2="1340" y2="741"/><line x1="1385.5" y1="655" x2="1385.5" y2="741"/>
<path d="M1505,634 H1404 V895 H1505"/>
<path d="M1404,634 H1421 V765 H1404"/><line x1="1412" y1="650" x2="1412" y2="752"/>
<path d="M1421,765 H1430 L1505,691 M1430,765 L1505,839"/>
<path d="M1355.5,664 V560 H1392 M1416,560 H1428 V658"/>
<circle cx="1404" cy="560" r="12"/><circle cx="1396" cy="595" r="11"/><line x1="1396" y1="606" x2="1396" y2="655"/>
<circle cx="1356" cy="667" r="3" stroke-width="1.5"/><circle cx="1428" cy="661" r="3" stroke-width="1.5"/>
<line x1="1385.5" y1="785.5" x2="1385.5" y2="872"/>
<line x1="1233" y1="785.5" x2="1385" y2="785.5" stroke-dasharray="7,5"/><line x1="1233" y1="872" x2="1385" y2="872" stroke-dasharray="7,5"/>
<line x1="1385.5" y1="785.5" x2="1404" y2="785.5"/><line x1="1385.5" y1="872" x2="1404" y2="872"/>
</g>
<text x="1404" y="565" font-size="11" fill="#f2f2f2" font-weight="bold" font-style="normal" text-anchor="middle" stroke="#f2f2f2" stroke-width="0.7" >P2</text>
<text x="1396" y="600" font-size="13" fill="#f2f2f2" font-weight="bold" font-style="normal" text-anchor="middle" stroke="#f2f2f2" stroke-width="0.7" >M</text>
<path d="M1404,656.0 L1391,665.8 L1404,675.5" stroke="#f2f2f2" stroke-width="1.5" fill="none"/>
<line x1="1389" y1="671.8" x2="1401" y2="659.8" stroke="#f2f2f2" stroke-width="1.5"/>
<circle cx="1395" cy="665.8" r="2.5" fill="#f2f2f2"/>
<path d="M1404,677.5 L1391,687.2 L1404,697.0" stroke="#f2f2f2" stroke-width="1.5" fill="none"/>
<line x1="1389" y1="693.2" x2="1401" y2="681.2" stroke="#f2f2f2" stroke-width="1.5"/>
<circle cx="1395" cy="687.2" r="2.5" fill="#f2f2f2"/>
<path d="M1404,699.0 L1391,708.8 L1404,718.5" stroke="#f2f2f2" stroke-width="1.5" fill="none"/>
<line x1="1389" y1="714.8" x2="1401" y2="702.8" stroke="#f2f2f2" stroke-width="1.5"/>
<circle cx="1395" cy="708.8" r="2.5" fill="#f2f2f2"/>
<path d="M1404,720.5 L1391,730.2 L1404,740.0" stroke="#f2f2f2" stroke-width="1.5" fill="none"/>
<line x1="1389" y1="736.2" x2="1401" y2="724.2" stroke="#f2f2f2" stroke-width="1.5"/>
<circle cx="1395" cy="730.2" r="2.5" fill="#f2f2f2"/>
<path d="M1404,786.5 L1391,796.3 L1404,806.1" stroke="#f2f2f2" stroke-width="1.5" fill="none"/>
<line x1="1389" y1="802.3" x2="1401" y2="790.3" stroke="#f2f2f2" stroke-width="1.5"/>
<circle cx="1395" cy="796.3" r="2.5" fill="#f2f2f2"/>
<path d="M1404,808.1 L1391,817.9 L1404,827.8" stroke="#f2f2f2" stroke-width="1.5" fill="none"/>
<line x1="1389" y1="823.9" x2="1401" y2="811.9" stroke="#f2f2f2" stroke-width="1.5"/>
<circle cx="1395" cy="817.9" r="2.5" fill="#f2f2f2"/>
<path d="M1404,829.8 L1391,839.6 L1404,849.4" stroke="#f2f2f2" stroke-width="1.5" fill="none"/>
<line x1="1389" y1="845.6" x2="1401" y2="833.6" stroke="#f2f2f2" stroke-width="1.5"/>
<circle cx="1395" cy="839.6" r="2.5" fill="#f2f2f2"/>
<path d="M1404,851.4 L1391,861.2 L1404,871.0" stroke="#f2f2f2" stroke-width="1.5" fill="none"/>
<line x1="1389" y1="867.2" x2="1401" y2="855.2" stroke="#f2f2f2" stroke-width="1.5"/>
<circle cx="1395" cy="861.2" r="2.5" fill="#f2f2f2"/>
<path d="M1348.5,675 V721 L1371,697 Z" fill="none" stroke="#2a2ad8" stroke-width="2.2"/>
<path d="M1364.5,806 L1343,829 L1364.5,853 Z" fill="none" stroke="#e424e4" stroke-width="2"/>
<text x="1410" y="629" font-size="17" fill="#e8e8e8" font-weight="normal" font-style="normal" text-anchor="start" textLength="12" lengthAdjust="spacingAndGlyphs" >F</text>
<text x="1383" y="774" font-size="18" fill="#f2f2f2" font-weight="bold" font-style="normal" text-anchor="start" textLength="17" lengthAdjust="spacingAndGlyphs" stroke="#f2f2f2" stroke-width="0.7" >S1</text>
<text x="1345" y="462" font-size="19" fill="#f2f2f2" font-weight="bold" font-style="normal" text-anchor="start" textLength="136" lengthAdjust="spacingAndGlyphs" stroke="#f2f2f2" stroke-width="0.7" >ARIA ESTERNA</text>
<text x="1362" y="488" font-size="19" fill="#f2f2f2" font-weight="bold" font-style="normal" text-anchor="start" textLength="103" lengthAdjust="spacingAndGlyphs" stroke="#f2f2f2" stroke-width="0.7" >2.460 mc/h</text>
<text x="1233" y="808" font-size="19" fill="#f2f2f2" font-weight="bold" font-style="normal" text-anchor="start" textLength="72" lengthAdjust="spacingAndGlyphs" stroke="#f2f2f2" stroke-width="0.7" >ARIA DI</text>
<text x="1209" y="832" font-size="19" fill="#f2f2f2" font-weight="bold" font-style="normal" text-anchor="start" textLength="119" lengthAdjust="spacingAndGlyphs" stroke="#f2f2f2" stroke-width="0.7" >ESPULSIONE</text>
<text x="1218" y="857" font-size="19" fill="#f2f2f2" font-weight="bold" font-style="normal" text-anchor="start" textLength="100" lengthAdjust="spacingAndGlyphs" stroke="#f2f2f2" stroke-width="0.7" >2.280 mc/h</text>
<line x1="-27.98" y1="1509.5" x2="1510" y2="1509.5" stroke="#e2e2e2" stroke-width="2.8" stroke-dasharray="31.5,16.1,2.5,15.48"/>
<line x1="621" y1="1511" x2="621" y2="1745" stroke="#b8bcc0" stroke-width="1.6"/>
<text x="245" y="1584" font-size="13" fill="#e4e43a" font-weight="normal" font-style="normal" text-anchor="start" textLength="112" lengthAdjust="spacingAndGlyphs" stroke="#e4e43a" stroke-width="0.5">ELETTROPOMPA</text>
<g stroke="#f0f040" stroke-width="2" fill="none"><path d="M117,1633 H240 L245,1652 H111.5 Z"/><rect x="111.5" y="1652" width="133.5" height="31"/><rect x="110" y="1683" width="138" height="12"/><line x1="110" y1="1687.5" x2="248" y2="1687.5"/><line x1="178.5" y1="1621" x2="178.5" y2="1695"/></g>
<g stroke="#f6f6a0" stroke-width="2"><line x1="113" y1="1697" x2="113" y2="1742"/><line x1="119" y1="1697" x2="119" y2="1742"/><line x1="125" y1="1697" x2="125" y2="1742"/><line x1="132" y1="1697" x2="132" y2="1742"/><line x1="142" y1="1697" x2="142" y2="1742"/><line x1="148" y1="1697" x2="148" y2="1742"/><line x1="158" y1="1697" x2="158" y2="1742"/><line x1="167" y1="1697" x2="167" y2="1742"/><line x1="176" y1="1697" x2="176" y2="1742"/><line x1="180" y1="1697" x2="180" y2="1742"/><line x1="184" y1="1697" x2="184" y2="1742"/><line x1="192" y1="1697" x2="192" y2="1742"/><line x1="202" y1="1697" x2="202" y2="1742"/><line x1="212" y1="1697" x2="212" y2="1742"/><line x1="222" y1="1697" x2="222" y2="1742"/><line x1="228" y1="1697" x2="228" y2="1742"/><line x1="234" y1="1697" x2="234" y2="1742"/><line x1="241" y1="1697" x2="241" y2="1742"/></g>
<g stroke="#f0f040" stroke-width="2" fill="none"><path d="M394,1633 H517 L522,1652 H388.5 Z"/><rect x="388.5" y="1652" width="133.5" height="31"/><rect x="387" y="1683" width="138" height="12"/><line x1="387" y1="1687.5" x2="525" y2="1687.5"/><line x1="455.5" y1="1621" x2="455.5" y2="1695"/></g>
<g stroke="#f6f6a0" stroke-width="2"><line x1="390" y1="1697" x2="390" y2="1742"/><line x1="396" y1="1697" x2="396" y2="1742"/><line x1="402" y1="1697" x2="402" y2="1742"/><line x1="409" y1="1697" x2="409" y2="1742"/><line x1="419" y1="1697" x2="419" y2="1742"/><line x1="425" y1="1697" x2="425" y2="1742"/><line x1="435" y1="1697" x2="435" y2="1742"/><line x1="444" y1="1697" x2="444" y2="1742"/><line x1="453" y1="1697" x2="453" y2="1742"/><line x1="457" y1="1697" x2="457" y2="1742"/><line x1="461" y1="1697" x2="461" y2="1742"/><line x1="469" y1="1697" x2="469" y2="1742"/><line x1="479" y1="1697" x2="479" y2="1742"/><line x1="489" y1="1697" x2="489" y2="1742"/><line x1="499" y1="1697" x2="499" y2="1742"/><line x1="505" y1="1697" x2="505" y2="1742"/><line x1="511" y1="1697" x2="511" y2="1742"/><line x1="518" y1="1697" x2="518" y2="1742"/></g>
<rect x="0" y="1610" width="17" height="86" fill="#c4c4c4"/>
<line x1="0" y1="1614" x2="16" y2="1614" stroke="#9a9a9a" stroke-width="1.5"/>
<line x1="0" y1="1619" x2="16" y2="1619" stroke="#9a9a9a" stroke-width="1.5"/>
<line x1="0" y1="1624" x2="16" y2="1624" stroke="#9a9a9a" stroke-width="1.5"/>
<line x1="0" y1="1629" x2="16" y2="1629" stroke="#9a9a9a" stroke-width="1.5"/>
<line x1="0" y1="1634" x2="16" y2="1634" stroke="#9a9a9a" stroke-width="1.5"/>
<line x1="0" y1="1639" x2="16" y2="1639" stroke="#9a9a9a" stroke-width="1.5"/>
<line x1="0" y1="1644" x2="16" y2="1644" stroke="#9a9a9a" stroke-width="1.5"/>
<line x1="0" y1="1649" x2="16" y2="1649" stroke="#9a9a9a" stroke-width="1.5"/>
<line x1="0" y1="1654" x2="16" y2="1654" stroke="#9a9a9a" stroke-width="1.5"/>
<line x1="0" y1="1659" x2="16" y2="1659" stroke="#9a9a9a" stroke-width="1.5"/>
<line x1="0" y1="1664" x2="16" y2="1664" stroke="#9a9a9a" stroke-width="1.5"/>
<line x1="0" y1="1669" x2="16" y2="1669" stroke="#9a9a9a" stroke-width="1.5"/>
<line x1="0" y1="1674" x2="16" y2="1674" stroke="#9a9a9a" stroke-width="1.5"/>
<line x1="0" y1="1679" x2="16" y2="1679" stroke="#9a9a9a" stroke-width="1.5"/>
<line x1="0" y1="1684" x2="16" y2="1684" stroke="#9a9a9a" stroke-width="1.5"/>
<line x1="0" y1="1689" x2="16" y2="1689" stroke="#9a9a9a" stroke-width="1.5"/>
<line x1="0" y1="1694" x2="16" y2="1694" stroke="#9a9a9a" stroke-width="1.5"/>
<text x="641" y="1566" font-size="32" fill="#a02612" font-weight="normal" font-style="italic" text-anchor="start" textLength="213" lengthAdjust="spacingAndGlyphs" >FLUIDI CALDI</text>
<text x="638" y="1601.5" font-size="24" fill="#e8e8e8" font-weight="normal" font-style="italic" text-anchor="start" textLength="84" lengthAdjust="spacingAndGlyphs" >FOTO 3</text>
<text x="1252" y="1601.5" font-size="24" fill="#e8e8e8" font-weight="normal" font-style="italic" text-anchor="start" textLength="84" lengthAdjust="spacingAndGlyphs" >FOTO 4</text>
<defs><linearGradient id="ph1" x1="0" y1="0" x2="0" y2="1"><stop offset="0" stop-color="#b2a99c"/><stop offset="0.35" stop-color="#cfc6ba"/><stop offset="0.55" stop-color="#d6cec4"/><stop offset="1" stop-color="#b3a99b"/></linearGradient><linearGradient id="pipe" x1="0" y1="0" x2="1" y2="0"><stop offset="0" stop-color="#6e6663"/><stop offset="0.5" stop-color="#8a8380"/><stop offset="1" stop-color="#5e5755"/></linearGradient><linearGradient id="brass" x1="0" y1="0" x2="1" y2="0"><stop offset="0" stop-color="#7a5a34"/><stop offset="0.5" stop-color="#a58255"/><stop offset="1" stop-color="#6e5030"/></linearGradient></defs>
<rect x="639" y="1614" width="610" height="84" fill="url(#ph1)"/>
<rect x="639" y="1614" width="610" height="2" fill="#7a746c"/>
<path d="M682,1616 H707 L705,1660 L700,1668 L703,1698 H688 L686,1668 L680,1660 Z" fill="#c8bcaa"/>
<path d="M686,1656 H705 V1670 H686 Z" fill="#9c7850"/>
<path d="M705,1616 H745 L730,1698 H695 Z" fill="url(#pipe)"/>
<path d="M982,1616 H1028 L1022,1628 H988 Z" fill="#d8d4cc"/>
<path d="M986,1628 H1024 V1650 H990 Z" fill="url(#brass)"/><path d="M982,1650 H1028 V1672 H982 Z" fill="url(#brass)"/><path d="M975,1672 H1035 V1698 H975 Z" fill="url(#brass)"/>
<line x1="975" y1="1672" x2="1035" y2="1672" stroke="#5a4026" stroke-width="1.5"/><line x1="982" y1="1650" x2="1028" y2="1650" stroke="#5a4026" stroke-width="1.5"/>
<rect x="639" y="1698" width="610" height="44" fill="#efeae4"/>
<rect x="1249" y="1614" width="251" height="84" fill="#c2c0bc"/>
<rect x="1249" y="1614" width="4" height="84" fill="#8a6a4a"/>
<path d="M1253,1616 H1342 V1658 L1300,1616 Z" fill="#9c6454"/>
<path d="M1253,1616 L1360,1698 H1253 Z" fill="#2e2a2a"/>
<path d="M1253,1616 H1272 L1380,1698 H1350 Z" fill="#a8b0bc"/>
<path d="M1253,1662 L1330,1698 H1300 L1253,1676 Z" fill="#9a6a5a"/>
<path d="M1253,1676 L1300,1698 H1253 Z" fill="#b8b8b8"/>
<rect x="1342" y="1614" width="46" height="84" fill="#d4d0ca"/>
<path d="M1384,1618 L1454,1698 H1384 Z" fill="#9a5e4e"/>
<path d="M1384,1616 L1456,1698" stroke="#e0dcd4" stroke-width="3"/>
<path d="M1390,1614 H1450 V1640 L1418,1614 Z" fill="#9aa2a8"/><path d="M1410,1614 L1456,1664 V1614 Z" fill="#8e969e"/>
<rect x="1440" y="1614" width="60" height="84" fill="#cfcdc8"/>
<rect x="1440" y="1614" width="60" height="16" fill="#b8b4ac"/><line x1="1464" y1="1630" x2="1464" y2="1698" stroke="#8a8680" stroke-width="2"/>
<rect x="1249" y="1698" width="251" height="44" fill="#e6e4e0"/>
<rect x="639" y="1696" width="861" height="1.5" fill="#6a6660"/>
<rect x="0" y="1697" width="1500" height="45" fill="#d2d2d2" fill-opacity="0.9"/>
<rect x="0" y="1697" width="1500" height="21" fill="#e6e6e6" fill-opacity="0.3"/>
<rect x="0" y="1697" width="17" height="45" fill="#e0e0e0" fill-opacity="0.5"/>
<g opacity="0.75"><rect x="639" y="1718" width="610" height="24" fill="#f2eeea"/><path d="M652,1718 H682 L688,1742 H660 Z" fill="#8e8e8e"/><path d="M692,1718 H738 L735,1742 H694 Z" fill="#d8d4ce"/><path d="M822,1718 H848 L852,1742 H826 Z" fill="#8a8a8a"/><path d="M862,1718 H892 L898,1742 H866 Z" fill="#9cc4b4"/><path d="M972,1718 H1038 V1742 H972 Z" fill="#ddd2c2"/><rect x="1249" y="1718" width="251" height="24" fill="#eeecea"/><path d="M1260,1718 L1300,1742 H1330 L1290,1718 Z" fill="#d0d0d0"/><path d="M1380,1718 L1420,1742 H1460 V1718 Z" fill="#e8d8d4"/></g>
<g stroke="#f4f49a" stroke-width="2.2"><line x1="113" y1="1697" x2="113" y2="1742"/><line x1="119" y1="1697" x2="119" y2="1742"/><line x1="125" y1="1697" x2="125" y2="1742"/><line x1="132" y1="1697" x2="132" y2="1742"/><line x1="142" y1="1697" x2="142" y2="1742"/><line x1="148" y1="1697" x2="148" y2="1742"/><line x1="158" y1="1697" x2="158" y2="1742"/><line x1="167" y1="1697" x2="167" y2="1742"/><line x1="176" y1="1697" x2="176" y2="1742"/><line x1="180" y1="1697" x2="180" y2="1742"/><line x1="184" y1="1697" x2="184" y2="1742"/><line x1="192" y1="1697" x2="192" y2="1742"/><line x1="202" y1="1697" x2="202" y2="1742"/><line x1="212" y1="1697" x2="212" y2="1742"/><line x1="222" y1="1697" x2="222" y2="1742"/><line x1="228" y1="1697" x2="228" y2="1742"/><line x1="234" y1="1697" x2="234" y2="1742"/><line x1="241" y1="1697" x2="241" y2="1742"/></g>
<g stroke="#f4f49a" stroke-width="2.2"><line x1="390" y1="1697" x2="390" y2="1742"/><line x1="396" y1="1697" x2="396" y2="1742"/><line x1="402" y1="1697" x2="402" y2="1742"/><line x1="409" y1="1697" x2="409" y2="1742"/><line x1="419" y1="1697" x2="419" y2="1742"/><line x1="425" y1="1697" x2="425" y2="1742"/><line x1="435" y1="1697" x2="435" y2="1742"/><line x1="444" y1="1697" x2="444" y2="1742"/><line x1="453" y1="1697" x2="453" y2="1742"/><line x1="457" y1="1697" x2="457" y2="1742"/><line x1="461" y1="1697" x2="461" y2="1742"/><line x1="469" y1="1697" x2="469" y2="1742"/><line x1="479" y1="1697" x2="479" y2="1742"/><line x1="489" y1="1697" x2="489" y2="1742"/><line x1="499" y1="1697" x2="499" y2="1742"/><line x1="505" y1="1697" x2="505" y2="1742"/><line x1="511" y1="1697" x2="511" y2="1742"/><line x1="518" y1="1697" x2="518" y2="1742"/></g>
<text x="3" y="1726" font-size="21" fill="#606060" font-style="italic" style="font-family:'Liberation Mono',monospace">un  comando</text>
</svg>
</body></html>
